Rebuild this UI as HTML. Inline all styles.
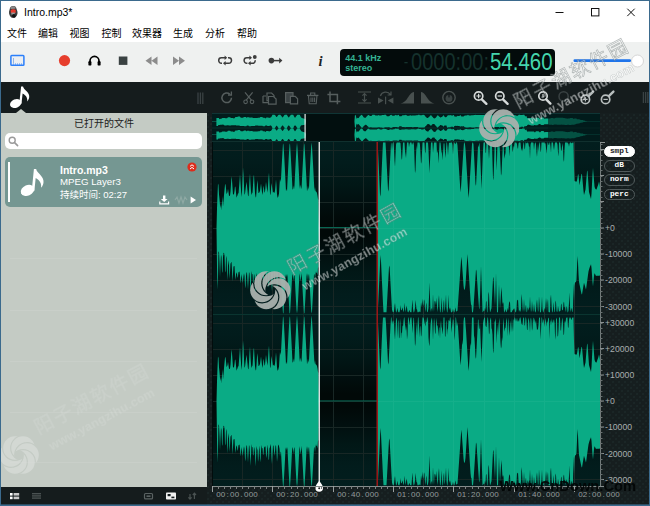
<!DOCTYPE html>
<html><head><meta charset="utf-8"><title>Intro.mp3*</title>
<style>
*{margin:0;padding:0;box-sizing:border-box}
html,body{width:650px;height:506px;overflow:hidden;background:#fff}
body{position:relative;font-family:"Liberation Sans","Noto Sans CJK SC",sans-serif;font-size:10px;color:#000}
.abs{position:absolute}
#win{position:absolute;left:0;top:0;width:650px;height:506px;overflow:hidden;background:#fff}
#bd{position:absolute;left:0;top:0;width:650px;height:506px;border:1px solid #3b6a8d;box-shadow:inset 0 -1px 0 rgba(59,106,141,0.6);pointer-events:none;z-index:50}
#title{left:24px;top:6px;font-size:10.5px;line-height:13px;color:#000;white-space:nowrap}
.menu{top:27px;font-size:10px;line-height:14px;white-space:nowrap;color:#000}
#tb{left:1px;top:42px;width:648px;height:40px;background:#eff1f0}
#dark{left:1px;top:82px;width:648px;height:423px;background-color:#161e1f;background-image:radial-gradient(circle,#202d2e 0.5px,transparent 0.9px),radial-gradient(circle,#202d2e 0.5px,transparent 0.9px);background-size:6px 6px;background-position:0 0,3px 3px}
#hdr{left:1px;top:82px;width:648px;height:31px;background-color:#151c1d}
#lp{left:1px;top:113px;width:206px;height:374px;background:#c4cbc4}
#lpb{left:1px;top:487px;width:206px;height:18px;background:#151c1d}
#heading{left:1px;top:117px;width:206px;text-align:center;font-size:10px;line-height:14px;color:#222}
#search{left:5px;top:133px;width:197px;height:16px;background:#fff;border-radius:5px}
#card{left:5px;top:157px;width:197px;height:50px;background:#759792;border-radius:5px}
#card .bar{left:3px;top:5px;width:1.5px;height:40px;background:#fff}
.ct{left:55px;color:#fff;white-space:nowrap;line-height:12px}
#lcd{left:340px;top:49px;width:215px;height:27px;background:#030b0b;border-radius:4px}
.lcds{left:6px;color:#3fc9a4;font-weight:bold;font-size:8px;line-height:9px;white-space:nowrap}
.sb{left:603.5px;width:31.5px;height:11.6px;border-radius:6px;border:1px solid #515a5b;color:#fff;font-family:"Liberation Mono",monospace;font-weight:bold;font-size:7.8px;line-height:9.6px;text-align:center}
.wm{position:absolute;white-space:nowrap;transform-origin:0 50%;pointer-events:none}
</style></head><body>
<div id="win">
<!-- title bar -->
<svg class="abs" style="left:8px;top:5px" width="10.5" height="13.6" viewBox="0 0 10 13"><path d="M2,2.5 C3,0.5 6.5,0.3 7.6,2.2 L8.6,5 C9.6,7 9.2,9.6 7.4,11.4 C6.2,12.6 3.8,12.6 2.6,11.4 C0.8,9.6 0.6,6.6 1.4,4.8Z" fill="#3a3a3a"/><path d="M2.6,5.2 C3.6,3.8 6.4,3.8 7.4,5.2 L7.2,7.6 L2.8,7.6Z" fill="#e8392c"/><path d="M2,2.6 C3,1 6.4,0.8 7.4,2.4 L7,3.6 L2.6,3.8Z" fill="#8a8a8a"/><rect x="3.2" y="7.2" width="3.2" height="2" fill="#9a9a9a"/><circle cx="5.6" cy="10.4" r="1.7" fill="#111"/></svg>
<div id="title" class="abs">Intro.mp3*</div>
<svg class="abs" style="left:540px;top:1px" width="109" height="24" viewBox="0 0 109 24" fill="none" stroke="#111" stroke-width="1"><line x1="15.5" y1="11.5" x2="23.5" y2="11.5"/><rect x="51.5" y="7.5" width="7.4" height="7.4"/><path d="M87.3,7.7 L94.7,15.1 M94.7,7.7 L87.3,15.1"/></svg>
<div class="abs menu" style="left:7px">文件</div><div class="abs menu" style="left:38px">编辑</div><div class="abs menu" style="left:69.5px">视图</div><div class="abs menu" style="left:101.5px">控制</div><div class="abs menu" style="left:132px">效果器</div><div class="abs menu" style="left:173px">生成</div><div class="abs menu" style="left:205px">分析</div><div class="abs menu" style="left:237px">帮助</div>
<!-- toolbar -->
<div id="tb" class="abs"></div>
<svg class="abs" style="left:0;top:42px" width="650" height="40" viewBox="0 42 650 40">
 <rect x="10.9" y="55.6" width="13" height="9.7" rx="0.8" fill="#eceff2" stroke="#2b7ffa" stroke-width="1.5"/>
 <line x1="13.5" y1="58" x2="13.5" y2="63" stroke="#7fa6e0" stroke-width="0.8"/><line x1="13" y1="64" x2="22.6" y2="64" stroke="#2b7ffa" stroke-width="0.8" stroke-dasharray="1 1"/>
 <circle cx="64.5" cy="60.6" r="5.6" fill="#e63e2d"/>
 <path d="M90,63 v-2 a4.5,4.6 0 0 1 9,0 v2" fill="none" stroke="#000" stroke-width="1.7"/><rect x="88.4" y="61" width="3" height="4.6" rx="1.2" fill="#000"/><rect x="97.6" y="61" width="3" height="4.6" rx="1.2" fill="#000"/>
 <rect x="118.8" y="56.5" width="8.6" height="8.4" fill="#3a4242"/>
 <path d="M151.5,56.6 v8.4 l-6,-4.2z M157.5,56.6 v8.4 l-6,-4.2z" fill="#8c8c8c"/>
 <path d="M173,56.6 v8.4 l6,-4.2z M179,56.6 v8.4 l6,-4.2z" fill="#8c8c8c"/>
 <g fill="none" stroke="#3c3c3c" stroke-width="1.5">
  <path d="M222,63.2 h-0.6 a2.7,2.7 0 0 1 0,-5.4 h4"/><path d="M228,57.8 h0.8 a2.7,2.7 0 0 1 0,5.4 h-4"/>
  <path d="M247.4,63.2 h-0.6 a2.7,2.7 0 0 1 0,-5.4 h3.4"/><path d="M255,60.2 a2.7,2.7 0 0 1 -1.2,3 h-4"/>
  <path d="M273.5,60.6 h7"/>
 </g>
 <g fill="#3c3c3c"><path d="M224.6,55.6 l2.6,2.2 l-2.6,2.2z"/><path d="M225.6,61 l-2.6,2.2 l2.6,2.2z"/>
  <path d="M249.4,55.6 l2.6,2.2 l-2.6,2.2z"/><path d="M250.6,61 l-2.6,2.2 l2.6,2.2z"/><circle cx="254.8" cy="57" r="1.9"/>
  <circle cx="271.4" cy="60.6" r="2.8"/><path d="M279.2,57.8 l3.2,2.8 l-3.2,2.8z"/></g>
 <text x="318.6" y="65.8" font-family="Liberation Serif,serif" font-style="italic" font-weight="bold" font-size="14.5" fill="#222">i</text>
 <rect x="573.5" y="59.3" width="57.5" height="2.6" rx="1.2" fill="#1f74ea"/>
 <circle cx="637.5" cy="61" r="6" fill="#fff" stroke="#d6d6d6" stroke-width="1"/>
</svg>
<div id="lcd" class="abs">
 <svg class="abs" style="left:0;top:0" width="215" height="27" viewBox="340 49 215 27"><g font-family="Liberation Sans,sans-serif" font-weight="bold" font-size="9" fill="#35b393"><text x="345.2" y="61.4">44.1 kHz</text><text x="345.2" y="70.6">stereo</text></g><rect x="404.4" y="62" width="3.2" height="1.3" fill="#15322d"/><text x="411" y="70.2" font-family="Liberation Sans,sans-serif" font-size="24.4" fill="#15322d" textLength="78" lengthAdjust="spacingAndGlyphs">0000:00:</text><text x="490" y="70.2" font-family="Liberation Sans,sans-serif" font-size="24.4" fill="#45d6ad" textLength="62.5" lengthAdjust="spacingAndGlyphs">54.460</text></svg>
</div>
<!-- dark body -->
<div id="dark" class="abs"></div>
<div id="hdr" class="abs"></div>
<div id="lp" class="abs"></div>
<div id="lpb" class="abs"></div>
<div class="abs" style="left:10px;top:258px;width:187px;height:1px;background:#c9cfc9"></div><div class="abs" style="left:10px;top:310px;width:187px;height:1px;background:#c9cfc9"></div><div class="abs" style="left:10px;top:361px;width:187px;height:1px;background:#c9cfc9"></div><div class="abs" style="left:10px;top:412px;width:187px;height:1px;background:#c9cfc9"></div><div class="abs" style="left:10px;top:462px;width:187px;height:1px;background:#c9cfc9"></div>
<svg class="abs" style="left:0;top:82px" width="40" height="31" viewBox="0 82 40 31"><g fill="#fff"><ellipse cx="15.7" cy="103.5" rx="5.9" ry="4.2" transform="rotate(-22 15.7 103.5)"/><path d="M19.3,103.4 L21.1,86.5 L23,86.5 C23.6,89.6 28.6,91.6 29.2,95.8 C29.5,98.2 28.5,100.2 27.1,101.4 C27.8,98.6 26.4,95.6 22.6,93.6 L21.5,103.8 Z"/></g></svg>
<svg class="abs" style="left:16px;top:109px" width="10" height="4" viewBox="0 0 10 4"><path d="M0,4 L5,0 L10,4Z" fill="#c4cbc4"/></svg>
<div id="heading" class="abs">已打开的文件</div>
<div id="search" class="abs"><svg class="abs" style="left:3px;top:3px" width="11" height="11" viewBox="0 0 11 11"><circle cx="4.2" cy="4.2" r="3" fill="none" stroke="#9a9a9a" stroke-width="1.4"/><line x1="6.6" y1="6.6" x2="9.6" y2="9.6" stroke="#9a9a9a" stroke-width="1.6" stroke-linecap="round"/></svg></div>
<div id="card" class="abs">
 <div class="abs bar"></div>
 <svg class="abs" style="left:0;top:0" width="60" height="50" viewBox="0 0 60 50"><g fill="#fff" transform="translate(4.04,-96.63) scale(1.179,1.256)"><ellipse cx="15.7" cy="103.5" rx="5.9" ry="4.2" transform="rotate(-22 15.7 103.5)"/><path d="M19.3,103.4 L21.1,86.5 L23,86.5 C23.6,89.6 28.6,91.6 29.2,95.8 C29.5,98.2 28.5,100.2 27.1,101.4 C27.8,98.6 26.4,95.6 22.6,93.6 L21.5,103.8 Z"/></g></svg>
 <div class="abs ct" style="top:7px;font-weight:bold;font-size:10.5px">Intro.mp3</div>
 <div class="abs ct" style="top:19px;font-size:9.7px">MPEG Layer3</div>
 <div class="abs ct" style="top:32px;font-size:9.5px">持续时间: 02:27</div>
 <svg class="abs" style="left:182px;top:5px" width="10" height="10" viewBox="0 0 10 10"><circle cx="5" cy="5" r="4.6" fill="#dd2c1c"/><path d="M3,4.4 L5,2.8 L7,4.4 M3,7 L5,5.4 L7,7" stroke="#fff" stroke-width="1" fill="none"/></svg>
 <svg class="abs" style="left:154px;top:37.5px" width="40" height="10" viewBox="0 0 40 10"><path d="M4,0.5 h2.4 v3.4 h2.2 l-3.4,3 l-3.4,-3 h2.2z" fill="#fff"/><path d="M0.8,6.4 v2.4 h8.8 v-2.4" fill="none" stroke="#fff" stroke-width="1.2"/><path d="M16,5 l2,-3 l2,6 l2,-6 l2,6 l2,-6 l2,3" fill="none" stroke="#8fa9a4" stroke-width="1.2"/><path d="M31.6,1.4 v7.2 l5.4,-3.6z" fill="#fff"/></svg>
</div>
<!-- left bottom bar icons -->
<svg class="abs" style="left:1px;top:487px" width="206" height="18" viewBox="1 487 206 18">
 <g fill="#fff"><rect x="10" y="493" width="2.6" height="2.6"/><rect x="10" y="496.6" width="2.6" height="2.6"/><rect x="13.6" y="493" width="5.6" height="2.6" fill="#c8c8c8"/><rect x="13.6" y="496.6" width="5.6" height="2.6" fill="#c8c8c8"/></g>
 <g fill="#4a5252"><rect x="32" y="493" width="9" height="1.4"/><rect x="32" y="495.2" width="9" height="1.4"/><rect x="32" y="497.4" width="9" height="1.4"/></g>
 <rect x="144.5" y="493.5" width="8" height="5.4" rx="1" fill="none" stroke="#5a6262" stroke-width="1.2"/><rect x="146.5" y="495.4" width="4" height="1.6" fill="#5a6262"/>
 <rect x="166" y="492.6" width="10" height="7" rx="0.8" fill="#f2f2f2"/><rect x="167.6" y="494" width="3" height="2.2" fill="#151d1f"/><rect x="171.4" y="496.6" width="3" height="1.6" fill="#151d1f"/>
 <path d="M190,499 v-5 M188.4,497.4 l1.6,1.8 l1.6,-1.8 M194.4,493.4 v5.6 M192.8,495 l1.6,-1.8 l1.6,1.8" fill="none" stroke="#4a5252" stroke-width="1.2"/>
</svg>
<!-- header toolbar icons -->
<svg class="abs" style="left:0;top:82px" width="650" height="31" viewBox="0 82 650 31">
 <g stroke="#3a4244" stroke-width="1.3"><line x1="198" y1="92.5" x2="198" y2="104"/><line x1="200.4" y1="92.5" x2="200.4" y2="104"/><line x1="202.8" y1="92.5" x2="202.8" y2="104"/>
  <line x1="643.4" y1="92" x2="643.4" y2="103"/><line x1="645.6" y1="92" x2="645.6" y2="103"/><line x1="647.8" y1="92" x2="647.8" y2="103"/></g>
 <g fill="none" stroke="#565e5e" stroke-width="1.5">
  <path d="M231.5,97.8 a4.8,4.8 0 1 1 -1.6,-3.6"/><path d="M231.4,91.6 v3.4 h-3.4" stroke-width="1.3"/>
  <path d="M245,92.4 l6.6,8 M252.6,92.4 l-6.6,8" stroke-width="1.2"/><circle cx="245.6" cy="101.8" r="1.8" stroke-width="1.1"/><circle cx="252" cy="101.8" r="1.8" stroke-width="1.1"/>
  <path d="M267,93 h4.6 l2.4,2.4 v5.2 h-7z M263,96 h3 M263,96 v6.6 h6" stroke-width="1.2"/>
  <path d="M268.5,96.5 h5 l2.6,2.6 v5 h-7.6z" fill="#141c1e" stroke-width="1.2"/>
  <rect x="285.6" y="92.6" width="7.4" height="10" stroke-width="1.2" fill="#3a4244"/><path d="M290.4,96.4 h4.8 l2.4,2.4 v5 h-7.2z" fill="#141c1e" stroke-width="1.2"/>
  <path d="M308.4,95.6 h8.6 l-0.8,8.2 h-7z M307,95.4 h11.4 M310.6,95 v-2 h4.2 v2 M311,97.6 v4.4 M312.8,97.6 v4.4 M314.6,97.6 v4.4" stroke-width="1.1"/>
  <path d="M330,91.4 v10 h10.4 M327.4,94.4 h10 v9.8" stroke-width="1.5"/>
 </g>
 <g fill="none" stroke="#48504f" stroke-width="1.2">
  <path d="M358,92 h13 M358,103 h13 M364.5,93.6 v8 M362.4,95.6 l2.1,-2 l2.1,2 M362.4,99.4 l2.1,2 l2.1,-2"/>
  <path d="M380.4,96 a5.6,5.6 0 0 1 10,-1.4 M391,91.4 v3.6 h-3.4"/>
 </g>
 <g fill="#48504f"><path d="M378,97.4 v6.4 l5.6,-3.2z M393.4,97.4 v6.4 l-5.6,-3.2z"/><rect x="385" y="96.6" width="1.2" height="7.6"/>
  <path d="M400.4,103.4 h13.6 v-11.4 c-3,0 -5,4 -7,7 c-2,2.6 -4,4 -6.6,4.4z"/>
  <path d="M421,103.4 h13.6 c-2.6,-0.4 -4.6,-1.8 -6.6,-4.4 c-2,-3 -4,-7 -7,-7z"/>
 </g>
 <circle cx="449" cy="97.6" r="6.2" fill="none" stroke="#48504f" stroke-width="1.4"/><circle cx="449" cy="98.4" r="3.4" fill="#3a4242"/><rect x="448.3" y="93" width="1.4" height="4.4" fill="#141c1e"/>
 <!-- zoom icons -->
 <g fill="none" stroke="#d6dada" stroke-width="1.7">
  <circle cx="478.6" cy="96" r="4.2"/><path d="M481.8,99.4 l4.6,4.4" stroke-width="2.4" stroke-linecap="round"/><path d="M476.4,96 h4.4 M478.6,93.8 v4.4" stroke-width="1.2"/>
  <circle cx="499.8" cy="96" r="4.2"/><path d="M503,99.4 l4.6,4.4" stroke-width="2.4" stroke-linecap="round"/><path d="M497.6,96 h4.4" stroke-width="1.2"/>
  <circle cx="543" cy="96" r="4.2"/><path d="M546.2,99.4 l4.2,4.2" stroke-width="2.4" stroke-linecap="round"/><path d="M543,94 v3.6" stroke-width="1.2"/>
  <circle cx="585.4" cy="99.4" r="4.2" stroke="#b8bebe"/><path d="M588.6,96.2 l4.6,-4.6" stroke-width="2.4" stroke-linecap="round" stroke="#b8bebe"/><path d="M583.2,99.4 h4.4 M585.4,97.2 v4.4" stroke-width="1.2" stroke="#b8bebe"/>
  <circle cx="605.6" cy="99.4" r="4.2" stroke="#b8bebe"/><path d="M608.8,96.2 l4.6,-4.6" stroke-width="2.4" stroke-linecap="round" stroke="#b8bebe"/><path d="M603.4,99.4 h4.4" stroke-width="1.2" stroke="#b8bebe"/>
 </g>
 <g fill="none" stroke="#394142" stroke-width="1.5"><circle cx="521" cy="96.4" r="4.6"/><path d="M524.4,100 l3.6,3.6" stroke-width="2"/><circle cx="563.6" cy="96.4" r="4.6"/><path d="M567,100 l3.6,3.6" stroke-width="2"/></g>
</svg>

<svg class="abs" style="left:0;top:0" width="650" height="506" viewBox="0 0 650 506">
<defs>
<linearGradient id="gch" x1="0" y1="0" x2="0" y2="1">
 <stop offset="0" stop-color="#021e1e"/><stop offset="0.12" stop-color="#021c1c"/><stop offset="0.25" stop-color="#011716"/><stop offset="0.36" stop-color="#010f0f"/><stop offset="0.46" stop-color="#010908"/><stop offset="0.54" stop-color="#010908"/><stop offset="0.64" stop-color="#010f0f"/><stop offset="0.75" stop-color="#011716"/><stop offset="0.88" stop-color="#021c1c"/><stop offset="1" stop-color="#021e1e"/>
</linearGradient>
</defs>
<!-- overview -->
<rect x="212" y="113" width="388" height="29" fill="#021c1c"/>
<rect x="212" y="113" width="388" height="1" fill="#0f3535"/>
<line x1="212" y1="121.5" x2="600" y2="121.5" stroke="#0a5044"/>
<line x1="212" y1="128" x2="600" y2="128" stroke="#0a2e2c"/>
<line x1="212" y1="134.5" x2="600" y2="134.5" stroke="#0a5044"/>
<rect x="305" y="114" width="50" height="27" fill="#020f0f"/>
<path d="M216.4,117.9L216.9,117.9L217.4,117.9L217.9,117.9L218.4,117.9L218.9,118L219.4,119.1L219.9,119.3L220.4,118.8L220.9,118.8L221.4,118.7L221.9,118.3L222.4,118L222.9,117.9L223.4,117.9L223.9,117.9L224.4,117.9L224.9,117.9L225.4,118.2L225.9,118.3L226.4,118.3L226.9,118.3L227.4,117.9L227.9,117.3L228.4,117.3L228.9,117.3L229.4,117.3L229.9,117.3L230.4,117.6L230.9,118.1L231.4,118.1L231.9,118.1L232.4,118.1L232.9,118.1L233.4,118.2L233.9,118.5L234.4,118.2L234.9,117.7L235.4,117.1L235.9,117.1L236.4,117.1L236.9,117.1L237.4,117.1L237.9,116.6L238.4,116.6L238.9,116.6L239.4,116.6L239.9,116.6L240.4,117.2L240.9,117.7L241.4,117.7L241.9,117.7L242.4,117.7L242.9,117.7L243.4,117.6L243.9,117.1L244.4,117.1L244.9,117.1L245.4,117.1L245.9,117.1L246.4,117.9L246.9,117.3L247.4,117.2L247.9,117.2L248.4,117.2L248.9,117.2L249.4,117.2L249.9,117.9L250.4,117.6L250.9,117.6L251.4,117.6L251.9,117.6L252.4,117.6L252.9,118.1L253.4,117.9L253.9,117.9L254.4,117.9L254.9,117.9L255.4,117.9L255.9,118L256.4,118L256.9,118L257.4,118L257.9,117.7L258.4,117.7L258.9,117.7L259.4,117.7L259.9,117.4L260.4,117L260.9,117L261.4,117L261.9,117L262.4,117L262.9,117.8L263.4,117.8L263.9,117.8L264.4,117.8L264.9,118.1L265.4,118.4L265.9,118L266.4,117.5L266.9,117.5L267.4,117.5L267.9,117.5L268.4,117.5L268.9,118L269.4,118L269.9,117.5L270.4,117.5L270.9,117.5L271.4,116.8L271.9,116L272.4,114.8L272.9,114.8L273.4,114.8L273.9,114.8L274.4,114.8L274.9,114.9L275.4,115.5L275.9,116.2L276.4,116.9L276.9,116.9L277.4,116.2L277.9,115.5L278.4,114.9L278.9,114.8L279.4,114.8L279.9,114.8L280.4,114.8L280.9,115.4L281.4,116L281.9,116.8L282.4,117.5L282.9,117.2L283.4,116.5L283.9,115.8L284.4,115.1L284.9,114.7L285.4,114.7L285.9,114.7L286.4,114.7L286.9,114.7L287.4,115.8L287.9,116.5L288.4,117.2L288.9,117.5L289.4,116.8L289.9,116L290.4,115.4L290.9,114.8L291.4,114.8L291.9,114.8L292.4,114.8L292.9,114.8L293.4,114.9L293.9,116.2L294.4,116.9L294.9,117.7L295.4,117.4L295.9,116.6L296.4,115.9L296.9,115.2L297.4,114.7L297.9,114.7L298.4,114.7L298.9,114.7L299.4,114.7L299.9,115L300.4,116.3L300.9,117.1L301.4,117.8L301.9,118.1L302.4,118.1L302.9,118.4L303.4,118.5L303.9,118.6L304.4,118.8L304.9,119.1L305.4,119.1L305.9,121.3L306.4,121.3L306.9,121.3L307.4,121.3L307.9,121.3L308.4,121.3L308.9,121.3L309.4,121.3L309.9,121.3L310.4,121.3L310.9,121.3L311.4,121.3L311.9,121.3L312.4,121.3L312.9,121.3L313.4,121.3L313.9,121.3L314.4,121.3L314.9,121.3L315.4,121.3L315.9,121.3L316.4,121.3L316.9,121.3L317.4,121.3L317.9,121.3L318.4,121.3L318.9,121.3L319.4,121.3L319.9,121.3L320.4,121.3L320.9,121.3L321.4,121.3L321.9,121.3L322.4,121.3L322.9,121.3L323.4,121.3L323.9,121.3L324.4,121.3L324.9,121.3L325.4,121.3L325.9,121.3L326.4,121.3L326.9,121.3L327.4,121.3L327.9,121.3L328.4,121.3L328.9,121.3L329.4,121.3L329.9,121.3L330.4,121.3L330.9,121.3L331.4,121.3L331.9,121.3L332.4,121.3L332.9,121.3L333.4,121.3L333.9,121.3L334.4,121.3L334.9,121.3L335.4,121.3L335.9,121.3L336.4,121.3L336.9,121.3L337.4,121.3L337.9,121.3L338.4,121.3L338.9,121.3L339.4,121.3L339.9,121.3L340.4,121.3L340.9,121.3L341.4,121.3L341.9,121.3L342.4,121.3L342.9,121.3L343.4,121.3L343.9,121.3L344.4,121.3L344.9,121.3L345.4,121.3L345.9,121.3L346.4,121.3L346.9,121.3L347.4,121.3L347.9,121.3L348.4,121.3L348.9,121.3L349.4,121.3L349.9,121.3L350.4,121.3L350.9,121.3L351.4,121.3L351.9,121.3L352.4,121.3L352.9,121.3L353.4,121.3L353.9,121.3L354.4,121.3L354.9,115.2L355.4,115.2L355.9,115.2L356.4,119.2L356.9,117.6L357.4,117.9L357.9,118.2L358.4,118L358.9,117.7L359.4,116.8L359.9,116.3L360.4,115.7L360.9,115.2L361.4,114.7L361.9,115.1L362.4,115.6L362.9,116.1L363.4,117.1L363.9,117.4L364.4,117.6L364.9,117.9L365.4,117.7L365.9,117.4L366.4,116.7L366.9,116.2L367.4,115.7L367.9,115.2L368.4,115.1L368.9,115.1L369.4,115.6L369.9,115.9L370.4,115.9L370.9,115.9L371.4,115.9L371.9,115.4L372.4,114.8L372.9,114.7L373.4,114.7L373.9,114.7L374.4,114.7L374.9,115.1L375.4,115.5L375.9,115.6L376.4,115.6L376.9,115.6L377.4,115.6L377.9,115.6L378.4,115.1L378.9,115.3L379.4,115.5L379.9,115.5L380.4,115.5L380.9,115.5L381.4,115.5L381.9,114.9L382.4,114.9L382.9,114.9L383.4,114.9L383.9,114.9L384.4,114.8L384.9,114.8L385.4,114.8L385.9,114.8L386.4,115.5L386.9,116.2L387.4,116.2L387.9,116.2L388.4,116.3L388.9,116.3L389.4,116.1L389.9,115.4L390.4,115.1L390.9,115.1L391.4,114.8L391.9,115.3L392.4,115.8L392.9,115.8L393.4,115.8L393.9,115.8L394.4,115.8L394.9,115.2L395.4,114.7L395.9,115.3L396.4,115.3L396.9,115.3L397.4,115.3L397.9,115.3L398.4,114.7L398.9,115.1L399.4,116.2L399.9,116.2L400.4,116.2L400.9,116.2L401.4,116.2L401.9,115.7L402.4,115.2L402.9,115.2L403.4,115.2L403.9,115.2L404.4,115.2L404.9,115L405.4,114.7L405.9,115.3L406.4,115.3L406.9,115.3L407.4,115.8L407.9,116L408.4,115.8L408.9,115.8L409.4,115.8L409.9,115.3L410.4,115.3L410.9,115.6L411.4,115.7L411.9,115.6L412.4,115.6L412.9,115.6L413.4,115.5L413.9,115.5L414.4,115.5L414.9,115.5L415.4,115.5L415.9,115.3L416.4,115.3L416.9,115.3L417.4,115.3L417.9,114.9L418.4,114.7L418.9,114.7L419.4,114.8L419.9,115.3L420.4,115.3L420.9,115.3L421.4,115.3L421.9,115.3L422.4,114.9L422.9,114.8L423.4,114.8L423.9,114.9L424.4,115.2L424.9,115.6L425.4,116.4L425.9,116.9L426.4,117.5L426.9,117.7L427.4,118.1L427.9,118L428.4,117.6L428.9,117.1L429.4,116.6L429.9,116.2L430.4,115.4L430.9,115L431.4,115.4L431.9,116.3L432.4,116.7L432.9,117.2L433.4,117.9L433.9,118.3L434.4,118.5L434.9,118.2L435.4,118L435.9,117.5L436.4,116.9L436.9,116L437.4,115.6L437.9,115.2L438.4,115.8L438.9,116.3L439.4,116.8L439.9,116.9L440.4,117.5L440.9,117.5L441.4,117L441.9,117L442.4,116.4L442.9,115.9L443.4,115.1L443.9,115.7L444.4,116.4L444.9,117L445.4,117.2L445.9,117.2L446.4,117L446.9,116.4L447.4,115.7L447.9,115.2L448.4,115.2L448.9,115.2L449.4,115.2L449.9,115.2L450.4,115.2L450.9,115.1L451.4,115.5L451.9,115.5L452.4,115.5L452.9,115.5L453.4,115.1L453.9,114.9L454.4,116.5L454.9,116.6L455.4,116.6L455.9,116.7L456.4,116.6L456.9,116.6L457.4,115.8L457.9,116.1L458.4,116.1L458.9,116.1L459.4,116.1L459.9,115.6L460.4,115L460.9,115.8L461.4,116.4L461.9,116.4L462.4,116.4L462.9,116.6L463.4,116.4L463.9,116.3L464.4,115.7L464.9,115.5L465.4,115.5L465.9,115.5L466.4,115.5L466.9,115.3L467.4,115.2L467.9,114.8L468.4,115L468.9,115.4L469.4,115.4L469.9,115.4L470.4,115.4L470.9,115.4L471.4,115.2L471.9,115.2L472.4,115.2L472.9,115.2L473.4,115.2L473.9,115.1L474.4,115L474.9,115L475.4,114.8L475.9,115L476.4,115L476.9,115L477.4,115L477.9,115L478.4,115L478.9,115L479.4,115.1L479.9,115.1L480.4,115.1L480.9,115.1L481.4,115.1L481.9,115.1L482.4,115.1L482.9,115.1L483.4,115.1L483.9,115.1L484.4,115L484.9,114.8L485.4,114.8L485.9,114.9L486.4,114.9L486.9,115.5L487.4,115.5L487.9,115.5L488.4,115.5L488.9,114.8L489.4,114.7L489.9,114.7L490.4,115.1L490.9,115.1L491.4,115.1L491.9,115.1L492.4,115.2L492.9,115.4L493.4,115.4L493.9,115.5L494.4,115.5L494.9,115.4L495.4,115.2L495.9,115.2L496.4,115.2L496.9,115.2L497.4,115.2L497.9,115.2L498.4,115.1L498.9,114.7L499.4,114.7L499.9,114.8L500.4,115L500.9,115.3L501.4,115.3L501.9,115.3L502.4,115.3L502.9,115.3L503.4,115L503.9,114.8L504.4,114.9L504.9,115.2L505.4,115.2L505.9,115.2L506.4,115.2L506.9,115.2L507.4,115.1L507.9,115.1L508.4,115.1L508.9,115.1L509.4,115.1L509.9,114.9L510.4,114.8L510.9,115.2L511.4,115.4L511.9,115.4L512.4,115.4L512.9,115.4L513.4,115.4L513.9,115.1L514.4,115.1L514.9,115.2L515.4,115.2L515.9,115.6L516.4,115.7L516.9,115.7L517.4,115.7L517.9,115.7L518.4,115.1L518.9,114.7L519.4,114.7L519.9,114.8L520.4,114.9L520.9,114.9L521.4,114.9L521.9,114.9L522.4,114.9L522.9,114.8L523.4,114.7L523.9,114.7L524.4,114.7L524.9,116L525.4,116.6L525.9,115.9L526.4,115.9L526.9,117.5L527.4,118.3L527.9,118.1L528.4,117.9L528.9,117.9L529.4,117.9L529.9,117.9L530.4,117.9L530.9,117.9L531.4,117.9L531.9,117.9L532.4,117.9L532.9,117.9L533.4,117.9L533.9,117.9L534.4,118.6L534.9,118.9L535.4,118.5L535.9,117.7L536.4,117.7L536.9,117.7L537.4,117.7L537.9,117.7L538.4,117.7L538.9,118.1L539.4,118.6L539.9,119L540.4,118.5L540.9,117.9L541.4,117.5L541.9,117.5L542.4,117.5L542.9,117.5L543.4,117.5L543.9,117.9L544.4,118.7L544.9,118.8L545.4,118.6L545.9,118.5L546.4,118.4L546.9,118.4L547.4,118.4L547.9,118.4L548.4,118.4L548.9,118.4L549.4,118.4L549.9,118.4L550.4,118.4L550.9,118L551.4,118L551.9,118L552.4,118L552.9,118L553.4,118.2L553.9,118.4L554.4,118.5L554.9,118.1L555.4,117.9L555.9,117.8L556.4,117.8L556.9,117.8L557.4,117.8L557.9,117.8L558.4,117.8L558.9,117.8L559.4,117.8L559.9,117.8L560.4,117.8L560.9,117.8L561.4,117.8L561.9,117.8L562.4,117.8L562.9,117.8L563.4,118L563.9,118L564.4,118L564.9,118.3L565.4,118.3L565.9,118.5L566.4,118.5L566.9,118.5L567.4,118.7L567.9,118.6L568.4,118.6L568.9,118.6L569.4,118.6L569.9,118.3L570.4,117.9L570.9,117.9L571.4,117.9L571.9,117.9L572.4,117.9L572.9,118.3L573.4,118.7L573.9,118.9L574.4,118.5L574.9,118.5L575.4,118.5L575.9,118.5L576.4,118.5L576.9,119.2L577.4,119.2L577.9,119.2L578.4,119.2L578.9,119.2L579.4,119.2L579.9,119.7L580.4,119.7L580.9,120L581.4,120.1L581.9,120.1L582.4,120.1L582.9,120.1L583.4,120.4L583.9,120.4L584.4,120.5L584.9,120.7L585.4,120.9L585.9,120.9L586.4,121.1L586.9,121.2L587.4,121.3L587.9,121.3L588.4,121.3L588.9,121.3L589.4,121.3L589.9,121.3L590.4,121.3L590.9,121.3L591.4,121.3L591.9,121.3L592.4,121.3L592.9,121.3L593.4,121.3L593.9,121.3L594.4,121.3L594.9,121.3L595.4,121.3L595.9,121.3L596.4,121.3L596.9,121.3L597.4,121.3L597.9,121.3L598.4,121.3L598.9,121.3L598.9,121.3L598.4,121.3L597.9,121.3L597.4,121.3L596.9,121.3L596.4,121.3L595.9,121.3L595.4,121.3L594.9,121.3L594.4,121.3L593.9,121.3L593.4,121.3L592.9,121.3L592.4,121.3L591.9,121.3L591.4,121.3L590.9,121.3L590.4,121.3L589.9,121.3L589.4,121.3L588.9,121.3L588.4,121.3L587.9,121.3L587.4,121.3L586.9,121.4L586.4,121.4L585.9,121.6L585.4,121.7L584.9,121.9L584.4,121.9L583.9,121.9L583.4,122.1L582.9,122.4L582.4,122.4L581.9,122.5L581.4,122.7L580.9,122.7L580.4,122.7L579.9,123.2L579.4,123.2L578.9,123.4L578.4,123.4L577.9,123.4L577.4,123.7L576.9,123.7L576.4,123.7L575.9,124.2L575.4,124.2L574.9,124.2L574.4,124.7L573.9,124.7L573.4,124.7L572.9,124.7L572.4,124.7L571.9,124.6L571.4,125L570.9,125L570.4,125L569.9,125L569.4,125L568.9,124.8L568.4,124.7L567.9,124.7L567.4,124.7L566.9,124.9L566.4,124.9L565.9,124.9L565.4,124.9L564.9,124.9L564.4,124.7L563.9,124.7L563.4,124.7L562.9,124.7L562.4,124.7L561.9,124.7L561.4,124.6L560.9,124.7L560.4,124.7L559.9,124.7L559.4,124.7L558.9,124.8L558.4,124.8L557.9,124.8L557.4,124.8L556.9,124.8L556.4,124.5L555.9,124.5L555.4,124.5L554.9,124.4L554.4,124.4L553.9,124.4L553.4,124.9L552.9,124.9L552.4,124.9L551.9,124.9L551.4,124.6L550.9,124.7L550.4,124.7L549.9,124.7L549.4,124.7L548.9,124.7L548.4,124.3L547.9,124.3L547.4,124.3L546.9,124.3L546.4,124.3L545.9,124.3L545.4,124.3L544.9,124.3L544.4,124.3L543.9,124.7L543.4,125L542.9,125L542.4,125L541.9,125L541.4,125L540.9,124.7L540.4,124.3L539.9,123.9L539.4,124.1L538.9,124.3L538.4,124.5L537.9,124.7L537.4,125.2L536.9,125.2L536.4,125.2L535.9,125.2L535.4,125.2L534.9,125.1L534.4,125.1L533.9,125.5L533.4,125.5L532.9,125.5L532.4,125.5L531.9,125.5L531.4,125.5L530.9,125.3L530.4,125.2L529.9,125L529.4,124.9L528.9,124.6L528.4,124.7L527.9,124.7L527.4,125L526.9,125.9L526.4,125.9L525.9,126.3L525.4,126.3L524.9,126.3L524.4,126.3L523.9,127.6L523.4,127.5L522.9,126.8L522.4,126.8L521.9,126.8L521.4,126.8L520.9,126.8L520.4,127.3L519.9,127.5L519.4,127.5L518.9,127.5L518.4,127.5L517.9,127.3L517.4,127.2L516.9,127.2L516.4,127.2L515.9,127.3L515.4,127.3L514.9,127.3L514.4,127.3L513.9,127.4L513.4,127.4L512.9,127.5L512.4,127.5L511.9,127.5L511.4,127.3L510.9,127.2L510.4,127.2L509.9,127.2L509.4,127.2L508.9,127.2L508.4,127.3L507.9,127.3L507.4,127.3L506.9,126.9L506.4,126.9L505.9,126.9L505.4,126.9L504.9,126.9L504.4,127.1L503.9,127.1L503.4,127.1L502.9,127.1L502.4,127.1L501.9,127.1L501.4,127.1L500.9,127L500.4,127.1L499.9,127.5L499.4,127.6L498.9,127L498.4,127L497.9,127L497.4,127L496.9,127L496.4,127L495.9,127L495.4,127L494.9,127L494.4,127L493.9,127.1L493.4,127.1L492.9,127.1L492.4,127.4L491.9,127.4L491.4,127.4L490.9,127.4L490.4,127.2L489.9,127.2L489.4,127.2L488.9,127.2L488.4,127L487.9,127L487.4,127L486.9,127L486.4,127.5L485.9,127.5L485.4,127.4L484.9,127.4L484.4,127.4L483.9,127.4L483.4,127.1L482.9,127.1L482.4,127.1L481.9,127.1L481.4,126.9L480.9,126.9L480.4,126.9L479.9,126.9L479.4,126.9L478.9,127.6L478.4,127.2L477.9,127.2L477.4,127.2L476.9,127.1L476.4,127.2L475.9,127.2L475.4,127.2L474.9,127.6L474.4,127.6L473.9,127.6L473.4,127.5L472.9,127.6L472.4,127.6L471.9,127.7L471.4,127.3L470.9,127.2L470.4,127.2L469.9,127.2L469.4,127.2L468.9,127.2L468.4,127.4L467.9,127.6L467.4,127.6L466.9,127.6L466.4,127.6L465.9,127.4L465.4,127.3L464.9,127.3L464.4,127L463.9,126.3L463.4,126.3L462.9,126.3L462.4,126.5L461.9,126.3L461.4,126.3L460.9,126.4L460.4,126.4L459.9,126.4L459.4,125.9L458.9,125.9L458.4,125.9L457.9,125.9L457.4,125.7L456.9,125.9L456.4,125.9L455.9,125.6L455.4,125.9L454.9,126L454.4,126.1L453.9,127.1L453.4,127.5L452.9,126.8L452.4,126.8L451.9,126.8L451.4,126.8L450.9,126.8L450.4,127.2L449.9,127.2L449.4,127.2L448.9,127.2L448.4,127.2L447.9,127.6L447.4,127.7L446.9,127L446.4,125.5L445.9,125.5L445.4,125.5L444.9,125.4L444.4,125.4L443.9,126.2L443.4,126.8L442.9,126L442.4,125.6L441.9,125.4L441.4,125.2L440.9,124.9L440.4,125.1L439.9,125.5L439.4,126L438.9,126.4L438.4,126.8L437.9,127.4L437.4,127.4L436.9,127.2L436.4,126.4L435.9,125.8L435.4,125.4L434.9,124.9L434.4,124.1L433.9,123.9L433.4,123.9L432.9,124.1L432.4,124.2L431.9,124.7L431.4,125.4L430.9,125.8L430.4,125.5L429.9,124.8L429.4,124.4L428.9,124.3L428.4,124.1L427.9,124L427.4,124.2L426.9,124.8L426.4,125.4L425.9,125.9L425.4,126.3L424.9,127L424.4,127.4L423.9,127.5L423.4,127.5L422.9,127.5L422.4,127.5L421.9,127.5L421.4,127.6L420.9,127.6L420.4,127.6L419.9,127.6L419.4,127.6L418.9,127.6L418.4,127.5L417.9,126.9L417.4,126.9L416.9,126.9L416.4,126.9L415.9,126.9L415.4,126.9L414.9,126.9L414.4,126.9L413.9,126.9L413.4,127.2L412.9,127.2L412.4,127.2L411.9,127.1L411.4,127.1L410.9,127.1L410.4,127.1L409.9,126.9L409.4,126.9L408.9,126.9L408.4,126.9L407.9,126.9L407.4,127.1L406.9,127.1L406.4,127.1L405.9,126.9L405.4,127.2L404.9,127.2L404.4,126.9L403.9,126.9L403.4,126.9L402.9,126.9L402.4,126.9L401.9,127.1L401.4,126.3L400.9,126.3L400.4,126.3L399.9,126.3L399.4,126.3L398.9,127.3L398.4,127.3L397.9,127.3L397.4,127.2L396.9,127.1L396.4,127.1L395.9,127.1L395.4,127L394.9,127L394.4,127L393.9,127.1L393.4,127.1L392.9,127.3L392.4,127.3L391.9,127.8L391.4,127.8L390.9,127.7L390.4,127.7L389.9,127.4L389.4,127.2L388.9,127.1L388.4,127.2L387.9,127.2L387.4,127.2L386.9,127.2L386.4,127.2L385.9,127.2L385.4,127.2L384.9,127.2L384.4,127.4L383.9,127.7L383.4,127.7L382.9,127.7L382.4,127.7L381.9,127.6L381.4,127.5L380.9,127.5L380.4,127.5L379.9,127.3L379.4,127.3L378.9,127.3L378.4,127.3L377.9,127.3L377.4,127.6L376.9,127.6L376.4,127.4L375.9,127.4L375.4,127.4L374.9,127.4L374.4,127.4L373.9,127.6L373.4,127.6L372.9,127.6L372.4,127.6L371.9,127.6L371.4,127.3L370.9,127.3L370.4,127.3L369.9,127.3L369.4,127.5L368.9,127.7L368.4,126.8L367.9,126.4L367.4,125.9L366.9,125.4L366.4,124.9L365.9,124.7L365.4,124.7L364.9,125.2L364.4,125.5L363.9,126L363.4,126.4L362.9,127.3L362.4,127.8L361.9,127.8L361.4,127.4L360.9,126.8L360.4,126.3L359.9,125.8L359.4,125L358.9,124.4L358.4,124.1L357.9,124.2L357.4,124.5L356.9,124.8L356.4,123.5L355.9,127.5L355.4,127.5L354.9,127.5L354.4,121.3L353.9,121.3L353.4,121.3L352.9,121.3L352.4,121.3L351.9,121.3L351.4,121.3L350.9,121.3L350.4,121.3L349.9,121.3L349.4,121.3L348.9,121.3L348.4,121.3L347.9,121.3L347.4,121.3L346.9,121.3L346.4,121.3L345.9,121.3L345.4,121.3L344.9,121.3L344.4,121.3L343.9,121.3L343.4,121.3L342.9,121.3L342.4,121.3L341.9,121.3L341.4,121.3L340.9,121.3L340.4,121.3L339.9,121.3L339.4,121.3L338.9,121.3L338.4,121.3L337.9,121.3L337.4,121.3L336.9,121.3L336.4,121.3L335.9,121.3L335.4,121.3L334.9,121.3L334.4,121.3L333.9,121.3L333.4,121.3L332.9,121.3L332.4,121.3L331.9,121.3L331.4,121.3L330.9,121.3L330.4,121.3L329.9,121.3L329.4,121.3L328.9,121.3L328.4,121.3L327.9,121.3L327.4,121.3L326.9,121.3L326.4,121.3L325.9,121.3L325.4,121.3L324.9,121.3L324.4,121.3L323.9,121.3L323.4,121.3L322.9,121.3L322.4,121.3L321.9,121.3L321.4,121.3L320.9,121.3L320.4,121.3L319.9,121.3L319.4,121.3L318.9,121.3L318.4,121.3L317.9,121.3L317.4,121.3L316.9,121.3L316.4,121.3L315.9,121.3L315.4,121.3L314.9,121.3L314.4,121.3L313.9,121.3L313.4,121.3L312.9,121.3L312.4,121.3L311.9,121.3L311.4,121.3L310.9,121.3L310.4,121.3L309.9,121.3L309.4,121.3L308.9,121.3L308.4,121.3L307.9,121.3L307.4,121.3L306.9,121.3L306.4,121.3L305.9,121.3L305.4,124.4L304.9,124.4L304.4,125L303.9,125L303.4,125L302.9,125L302.4,125.3L301.9,125.3L301.4,125.3L300.9,125.7L300.4,126.4L299.9,127.7L299.4,127.9L298.9,127.9L298.4,127.9L297.9,127.9L297.4,127.9L296.9,127.5L296.4,126.8L295.9,126.1L295.4,125.4L294.9,125.4L294.4,125.8L293.9,126.5L293.4,127.9L292.9,127.9L292.4,127.9L291.9,127.9L291.4,127.9L290.9,127.9L290.4,127.4L289.9,126.7L289.4,126L288.9,125.4L288.4,125.5L287.9,126.3L287.4,127L286.9,127.9L286.4,127.9L285.9,127.9L285.4,127.9L284.9,127.9L284.4,127.6L283.9,127L283.4,126.3L282.9,125.5L282.4,125.4L281.9,126L281.4,126.7L280.9,127.4L280.4,127.9L279.9,127.9L279.4,127.9L278.9,127.9L278.4,127.9L277.9,127.2L277.4,126.5L276.9,125.8L276.4,125.8L275.9,126.5L275.4,127.2L274.9,127.9L274.4,127.9L273.9,127.9L273.4,127.9L272.9,127.9L272.4,127.9L271.9,126.7L271.4,126L270.9,125.6L270.4,125.6L269.9,125.6L269.4,126L268.9,126L268.4,126L267.9,126L267.4,126L266.9,125.5L266.4,125.5L265.9,125.5L265.4,125.5L264.9,126.2L264.4,126.2L263.9,126.2L263.4,126.2L262.9,126.2L262.4,125.8L261.9,125.8L261.4,125.8L260.9,125.8L260.4,125.8L259.9,125.8L259.4,125.7L258.9,125.7L258.4,125.7L257.9,125.5L257.4,125.5L256.9,125.5L256.4,125.5L255.9,125.5L255.4,125.5L254.9,126L254.4,126L253.9,126L253.4,126L252.9,126L252.4,126L251.9,126L251.4,126L250.9,126.3L250.4,126.3L249.9,126.3L249.4,126.3L248.9,126.3L248.4,125.5L247.9,125.5L247.4,125.5L246.9,125.6L246.4,126.3L245.9,126.3L245.4,126.3L244.9,126.3L244.4,126.3L243.9,126L243.4,126L242.9,126L242.4,126L241.9,126L241.4,126L240.9,126L240.4,126L239.9,126L239.4,125.5L238.9,125.5L238.4,125.5L237.9,125.6L237.4,125.6L236.9,125.6L236.4,125.6L235.9,125.6L235.4,125L234.9,125.2L234.4,125.2L233.9,125.2L233.4,125.3L232.9,125.3L232.4,125.3L231.9,125.3L231.4,125.3L230.9,125.4L230.4,125.4L229.9,125.4L229.4,125.4L228.9,125.4L228.4,125.2L227.9,125.2L227.4,125.2L226.9,125.2L226.4,125.4L225.9,125.4L225.4,125.4L224.9,125.4L224.4,125.4L223.9,124.7L223.4,124.7L222.9,124.7L222.4,124.6L221.9,124.8L221.4,124.8L220.9,124.8L220.4,124.8L219.9,125.1L219.4,125.1L218.9,125.1L218.4,125.1L217.9,126.1L217.4,126.1L216.9,126.1L216.4,126.1Z" fill="#0aab85"/>
<path d="M216.4,131.4L216.9,131.4L217.4,131.4L217.9,131.4L218.4,131.4L218.9,131.5L219.4,132.6L219.9,132.8L220.4,132.3L220.9,132.3L221.4,132.2L221.9,131.8L222.4,131.5L222.9,131.4L223.4,131.4L223.9,131.4L224.4,131.4L224.9,131.4L225.4,131.7L225.9,131.8L226.4,131.8L226.9,131.8L227.4,131.4L227.9,130.8L228.4,130.8L228.9,130.8L229.4,130.8L229.9,130.8L230.4,131.1L230.9,131.6L231.4,131.6L231.9,131.6L232.4,131.6L232.9,131.6L233.4,131.7L233.9,132L234.4,131.7L234.9,131.2L235.4,130.6L235.9,130.6L236.4,130.6L236.9,130.6L237.4,130.6L237.9,130.1L238.4,130.1L238.9,130.1L239.4,130.1L239.9,130.1L240.4,130.7L240.9,131.2L241.4,131.2L241.9,131.2L242.4,131.2L242.9,131.2L243.4,131.1L243.9,130.6L244.4,130.6L244.9,130.6L245.4,130.6L245.9,130.6L246.4,131.4L246.9,130.8L247.4,130.7L247.9,130.7L248.4,130.7L248.9,130.7L249.4,130.7L249.9,131.4L250.4,131.1L250.9,131.1L251.4,131.1L251.9,131.1L252.4,131.1L252.9,131.6L253.4,131.4L253.9,131.4L254.4,131.4L254.9,131.4L255.4,131.4L255.9,131.5L256.4,131.5L256.9,131.5L257.4,131.5L257.9,131.2L258.4,131.2L258.9,131.2L259.4,131.2L259.9,130.9L260.4,130.5L260.9,130.5L261.4,130.5L261.9,130.5L262.4,130.5L262.9,131.3L263.4,131.3L263.9,131.3L264.4,131.3L264.9,131.6L265.4,131.9L265.9,131.5L266.4,131L266.9,131L267.4,131L267.9,131L268.4,131L268.9,131.5L269.4,131.5L269.9,131L270.4,131L270.9,131L271.4,130.3L271.9,129.5L272.4,128.3L272.9,128.3L273.4,128.3L273.9,128.3L274.4,128.3L274.9,128.4L275.4,129L275.9,129.7L276.4,130.4L276.9,130.4L277.4,129.7L277.9,129L278.4,128.4L278.9,128.3L279.4,128.3L279.9,128.3L280.4,128.3L280.9,128.9L281.4,129.5L281.9,130.3L282.4,131L282.9,130.7L283.4,130L283.9,129.3L284.4,128.6L284.9,128.2L285.4,128.2L285.9,128.2L286.4,128.2L286.9,128.2L287.4,129.3L287.9,130L288.4,130.7L288.9,131L289.4,130.3L289.9,129.5L290.4,128.9L290.9,128.3L291.4,128.3L291.9,128.3L292.4,128.3L292.9,128.3L293.4,128.4L293.9,129.7L294.4,130.4L294.9,131.2L295.4,130.9L295.9,130.1L296.4,129.4L296.9,128.7L297.4,128.2L297.9,128.2L298.4,128.2L298.9,128.2L299.4,128.2L299.9,128.5L300.4,129.8L300.9,130.6L301.4,131.3L301.9,131.6L302.4,131.6L302.9,131.9L303.4,132L303.9,132.1L304.4,132.3L304.9,132.6L305.4,132.6L305.9,134.8L306.4,134.8L306.9,134.8L307.4,134.8L307.9,134.8L308.4,134.8L308.9,134.8L309.4,134.8L309.9,134.8L310.4,134.8L310.9,134.8L311.4,134.8L311.9,134.8L312.4,134.8L312.9,134.8L313.4,134.8L313.9,134.8L314.4,134.8L314.9,134.8L315.4,134.8L315.9,134.8L316.4,134.8L316.9,134.8L317.4,134.8L317.9,134.8L318.4,134.8L318.9,134.8L319.4,134.8L319.9,134.8L320.4,134.8L320.9,134.8L321.4,134.8L321.9,134.8L322.4,134.8L322.9,134.8L323.4,134.8L323.9,134.8L324.4,134.8L324.9,134.8L325.4,134.8L325.9,134.8L326.4,134.8L326.9,134.8L327.4,134.8L327.9,134.8L328.4,134.8L328.9,134.8L329.4,134.8L329.9,134.8L330.4,134.8L330.9,134.8L331.4,134.8L331.9,134.8L332.4,134.8L332.9,134.8L333.4,134.8L333.9,134.8L334.4,134.8L334.9,134.8L335.4,134.8L335.9,134.8L336.4,134.8L336.9,134.8L337.4,134.8L337.9,134.8L338.4,134.8L338.9,134.8L339.4,134.8L339.9,134.8L340.4,134.8L340.9,134.8L341.4,134.8L341.9,134.8L342.4,134.8L342.9,134.8L343.4,134.8L343.9,134.8L344.4,134.8L344.9,134.8L345.4,134.8L345.9,134.8L346.4,134.8L346.9,134.8L347.4,134.8L347.9,134.8L348.4,134.8L348.9,134.8L349.4,134.8L349.9,134.8L350.4,134.8L350.9,134.8L351.4,134.8L351.9,134.8L352.4,134.8L352.9,134.8L353.4,134.8L353.9,134.8L354.4,134.8L354.9,128.7L355.4,128.7L355.9,128.7L356.4,132.7L356.9,131.1L357.4,131.4L357.9,131.7L358.4,131.5L358.9,131.2L359.4,130.4L359.9,129.8L360.4,129.3L360.9,128.7L361.4,128.4L361.9,128.7L362.4,129.1L362.9,129.6L363.4,130.6L363.9,130.9L364.4,131.1L364.9,131.4L365.4,131.2L365.9,130.9L366.4,130.2L366.9,129.7L367.4,129.2L367.9,128.8L368.4,128.7L368.9,128.8L369.4,129.2L369.9,129.5L370.4,129.5L370.9,129.5L371.4,129.5L371.9,129.4L372.4,129.4L372.9,129.4L373.4,129.5L373.9,129.4L374.4,129.4L374.9,129.4L375.4,129.4L375.9,129.4L376.4,129.6L376.9,129.5L377.4,129.1L377.9,129.1L378.4,128.8L378.9,128.8L379.4,129L379.9,129.5L380.4,129.6L380.9,129.5L381.4,129.5L381.9,129.5L382.4,129.2L382.9,128.8L383.4,128.8L383.9,128.8L384.4,128.8L384.9,129.1L385.4,129.1L385.9,129.1L386.4,129.1L386.9,129.8L387.4,129.8L387.9,129.8L388.4,129.9L388.9,129.9L389.4,129.7L389.9,129.3L390.4,129.3L390.9,129.4L391.4,129.4L391.9,129.4L392.4,129.6L392.9,129.6L393.4,129.3L393.9,129.3L394.4,129.3L394.9,128.7L395.4,128.6L395.9,128.8L396.4,128.8L396.9,128.8L397.4,128.8L397.9,128.8L398.4,128.6L398.9,129.4L399.4,129.8L399.9,129.8L400.4,129.8L400.9,129.9L401.4,129.8L401.9,129.2L402.4,129.5L402.9,129.5L403.4,129.5L403.9,129.5L404.4,129.5L404.9,129.2L405.4,129.2L405.9,129.2L406.4,129.2L406.9,129.2L407.4,129.3L407.9,129.5L408.4,129.5L408.9,129.6L409.4,129.5L409.9,129.5L410.4,129.5L410.9,129.3L411.4,129.3L411.9,129.2L412.4,129.2L412.9,129.3L413.4,129.3L413.9,129.3L414.4,129.3L414.9,129.4L415.4,129.4L415.9,129.3L416.4,129.3L416.9,129.3L417.4,128.9L417.9,128.6L418.4,128.6L418.9,129.1L419.4,129.1L419.9,129.1L420.4,129.1L420.9,128.9L421.4,129.5L421.9,129.5L422.4,129.5L422.9,129.5L423.4,129.5L423.9,128.8L424.4,128.8L424.9,129.3L425.4,130.1L425.9,130.5L426.4,131L426.9,131.2L427.4,131.6L427.9,131.5L428.4,131.4L428.9,130.6L429.4,130.1L429.9,129.7L430.4,129.5L430.9,128.7L431.4,129L431.9,129.8L432.4,130.2L432.9,130.8L433.4,131.4L433.9,131.8L434.4,132L434.9,131.7L435.4,131.7L435.9,131.2L436.4,130.4L436.9,129.8L437.4,129.8L437.9,129.1L438.4,129.4L438.9,129.8L439.4,130.3L439.9,130.4L440.4,131L440.9,131L441.4,130.5L441.9,130.5L442.4,130L442.9,129.5L443.4,129L443.9,129.3L444.4,130.1L444.9,130.7L445.4,130.7L445.9,130.7L446.4,130.7L446.9,130L447.4,129.3L447.9,128.7L448.4,128.8L448.9,128.8L449.4,128.8L449.9,128.8L450.4,128.8L450.9,128.8L451.4,129.2L451.9,129.2L452.4,129.2L452.9,129.2L453.4,129.1L453.9,129L454.4,130L454.9,130.2L455.4,130.5L455.9,130.3L456.4,130.3L456.9,130.2L457.4,129.4L457.9,129.7L458.4,129.7L458.9,129.7L459.4,129.8L459.9,129.4L460.4,129.3L460.9,129.6L461.4,129.9L461.9,129.9L462.4,129.9L462.9,130.4L463.4,130.1L463.9,129.8L464.4,129.6L464.9,129.6L465.4,129.1L465.9,129.1L466.4,129.1L466.9,128.9L467.4,129.3L467.9,129.3L468.4,129.3L468.9,129.3L469.4,129.3L469.9,129.3L470.4,129.3L470.9,129.3L471.4,129.1L471.9,129.1L472.4,129.1L472.9,129.1L473.4,129.1L473.9,129.1L474.4,128.6L474.9,128.6L475.4,128.6L475.9,128.6L476.4,128.6L476.9,128.6L477.4,128.6L477.9,128.6L478.4,128.6L478.9,128.6L479.4,128.7L479.9,128.7L480.4,128.7L480.9,128.7L481.4,128.7L481.9,128.8L482.4,128.8L482.9,128.8L483.4,128.8L483.9,129L484.4,129L484.9,129L485.4,129L485.9,129L486.4,129L486.9,129.1L487.4,129.1L487.9,129.1L488.4,129.1L488.9,129L489.4,129L489.9,129L490.4,129L490.9,128.9L491.4,128.7L491.9,128.7L492.4,128.8L492.9,129.1L493.4,129.1L493.9,129.1L494.4,129L494.9,129L495.4,128.9L495.9,129.5L496.4,129.5L496.9,129.5L497.4,129.5L497.9,129.5L498.4,129L498.9,128.6L499.4,128.9L499.9,128.8L500.4,128.8L500.9,128.8L501.4,128.8L501.9,128.8L502.4,128.9L502.9,128.8L503.4,129.4L503.9,129.4L504.4,129.4L504.9,129.4L505.4,129.5L505.9,128.8L506.4,128.8L506.9,128.8L507.4,128.7L507.9,128.7L508.4,129.3L508.9,129.5L509.4,129.5L509.9,129.5L510.4,129.5L510.9,129.5L511.4,129.3L511.9,129.3L512.4,129.3L512.9,129.3L513.4,129L513.9,129L514.4,129L514.9,129L515.4,129L515.9,129.2L516.4,129.2L516.9,129.2L517.4,129.3L517.9,129.3L518.4,128.6L518.9,128.6L519.4,128.9L519.9,128.9L520.4,128.9L520.9,128.9L521.4,128.9L521.9,128.9L522.4,128.5L522.9,128.5L523.4,128.5L523.9,128.5L524.4,128.5L524.9,129.5L525.4,130.2L525.9,129.5L526.4,129.5L526.9,131L527.4,131.8L527.9,131.6L528.4,131.4L528.9,131.4L529.4,131.4L529.9,131.4L530.4,131.4L530.9,131.4L531.4,131.4L531.9,131.4L532.4,131.4L532.9,131.4L533.4,131.4L533.9,131.4L534.4,132.1L534.9,132.4L535.4,132L535.9,131.2L536.4,131.2L536.9,131.2L537.4,131.2L537.9,131.2L538.4,131.2L538.9,131.6L539.4,132.1L539.9,132.5L540.4,132L540.9,131.4L541.4,131L541.9,131L542.4,131L542.9,131L543.4,131L543.9,131.4L544.4,132.2L544.9,132.3L545.4,132.1L545.9,132L546.4,131.9L546.9,131.9L547.4,131.9L547.9,131.9L548.4,131.9L548.9,131.9L549.4,131.9L549.9,131.9L550.4,131.9L550.9,131.5L551.4,131.5L551.9,131.5L552.4,131.5L552.9,131.5L553.4,131.7L553.9,131.9L554.4,132L554.9,131.6L555.4,131.4L555.9,131.3L556.4,131.3L556.9,131.3L557.4,131.3L557.9,131.3L558.4,131.3L558.9,131.3L559.4,131.3L559.9,131.3L560.4,131.3L560.9,131.3L561.4,131.3L561.9,131.3L562.4,131.3L562.9,131.3L563.4,131.5L563.9,131.5L564.4,131.5L564.9,131.8L565.4,131.8L565.9,132L566.4,132L566.9,132L567.4,132.2L567.9,132.1L568.4,132.1L568.9,132.1L569.4,132.1L569.9,131.8L570.4,131.4L570.9,131.4L571.4,131.4L571.9,131.4L572.4,131.4L572.9,131.8L573.4,132.2L573.9,132.4L574.4,132L574.9,132L575.4,132L575.9,132L576.4,132L576.9,132.7L577.4,132.7L577.9,132.7L578.4,132.7L578.9,132.7L579.4,132.7L579.9,133.2L580.4,133.2L580.9,133.5L581.4,133.6L581.9,133.6L582.4,133.6L582.9,133.6L583.4,133.9L583.9,133.9L584.4,134L584.9,134.2L585.4,134.4L585.9,134.4L586.4,134.6L586.9,134.7L587.4,134.8L587.9,134.8L588.4,134.8L588.9,134.8L589.4,134.8L589.9,134.8L590.4,134.8L590.9,134.8L591.4,134.8L591.9,134.8L592.4,134.8L592.9,134.8L593.4,134.8L593.9,134.8L594.4,134.8L594.9,134.8L595.4,134.8L595.9,134.8L596.4,134.8L596.9,134.8L597.4,134.8L597.9,134.8L598.4,134.8L598.9,134.8L598.9,134.8L598.4,134.8L597.9,134.8L597.4,134.8L596.9,134.8L596.4,134.8L595.9,134.8L595.4,134.8L594.9,134.8L594.4,134.8L593.9,134.8L593.4,134.8L592.9,134.8L592.4,134.8L591.9,134.8L591.4,134.8L590.9,134.8L590.4,134.8L589.9,134.8L589.4,134.8L588.9,134.8L588.4,134.8L587.9,134.8L587.4,134.8L586.9,134.9L586.4,134.9L585.9,135.1L585.4,135.2L584.9,135.4L584.4,135.4L583.9,135.4L583.4,135.6L582.9,135.9L582.4,135.9L581.9,136L581.4,136.2L580.9,136.2L580.4,136.2L579.9,136.7L579.4,136.7L578.9,136.9L578.4,136.9L577.9,136.9L577.4,137.2L576.9,137.2L576.4,137.2L575.9,137.7L575.4,137.7L574.9,137.7L574.4,138.2L573.9,138.2L573.4,138.2L572.9,138.2L572.4,138.2L571.9,138.1L571.4,138.5L570.9,138.5L570.4,138.5L569.9,138.5L569.4,138.5L568.9,138.3L568.4,138.2L567.9,138.2L567.4,138.2L566.9,138.4L566.4,138.4L565.9,138.4L565.4,138.4L564.9,138.4L564.4,138.2L563.9,138.2L563.4,138.2L562.9,138.2L562.4,138.2L561.9,138.2L561.4,138.1L560.9,138.2L560.4,138.2L559.9,138.2L559.4,138.2L558.9,138.3L558.4,138.3L557.9,138.3L557.4,138.3L556.9,138.3L556.4,138L555.9,138L555.4,138L554.9,137.9L554.4,137.9L553.9,137.9L553.4,138.4L552.9,138.4L552.4,138.4L551.9,138.4L551.4,138.1L550.9,138.2L550.4,138.2L549.9,138.2L549.4,138.2L548.9,138.2L548.4,137.8L547.9,137.8L547.4,137.8L546.9,137.8L546.4,137.8L545.9,137.8L545.4,137.8L544.9,137.8L544.4,137.8L543.9,138.2L543.4,138.5L542.9,138.5L542.4,138.5L541.9,138.5L541.4,138.5L540.9,138.2L540.4,137.8L539.9,137.4L539.4,137.6L538.9,137.8L538.4,138L537.9,138.2L537.4,138.7L536.9,138.7L536.4,138.7L535.9,138.7L535.4,138.7L534.9,138.6L534.4,138.6L533.9,139L533.4,139L532.9,139L532.4,139L531.9,139L531.4,139L530.9,138.8L530.4,138.7L529.9,138.5L529.4,138.4L528.9,138.1L528.4,138.2L527.9,138.2L527.4,138.5L526.9,139.4L526.4,139.4L525.9,139.8L525.4,139.8L524.9,139.8L524.4,139.8L523.9,141.1L523.4,141L522.9,140.3L522.4,140.3L521.9,140.3L521.4,140.3L520.9,140.3L520.4,140.8L519.9,141L519.4,141L518.9,141L518.4,141L517.9,140.8L517.4,140.7L516.9,140.7L516.4,140.7L515.9,140.8L515.4,140.8L514.9,140.8L514.4,140.8L513.9,140.9L513.4,140.9L512.9,141L512.4,141L511.9,141L511.4,140.8L510.9,140.7L510.4,140.7L509.9,140.7L509.4,140.7L508.9,140.7L508.4,140.8L507.9,140.8L507.4,140.8L506.9,140.4L506.4,140.4L505.9,140.4L505.4,140.4L504.9,140.4L504.4,140.6L503.9,140.6L503.4,140.6L502.9,140.6L502.4,140.6L501.9,140.6L501.4,140.6L500.9,140.5L500.4,140.6L499.9,141L499.4,141.1L498.9,140.5L498.4,140.5L497.9,140.5L497.4,140.5L496.9,140.5L496.4,140.5L495.9,140.5L495.4,140.5L494.9,140.5L494.4,140.5L493.9,140.6L493.4,140.6L492.9,140.6L492.4,140.9L491.9,140.9L491.4,140.9L490.9,140.9L490.4,140.7L489.9,140.7L489.4,140.7L488.9,140.7L488.4,140.5L487.9,140.5L487.4,140.5L486.9,140.5L486.4,141L485.9,141L485.4,140.9L484.9,140.9L484.4,140.9L483.9,140.9L483.4,140.6L482.9,140.6L482.4,140.6L481.9,140.6L481.4,140.4L480.9,140.4L480.4,140.4L479.9,140.4L479.4,140.4L478.9,141.1L478.4,140.7L477.9,140.7L477.4,140.7L476.9,140.6L476.4,140.7L475.9,140.7L475.4,140.7L474.9,141.1L474.4,141.1L473.9,141.1L473.4,141L472.9,141.1L472.4,141.1L471.9,141.2L471.4,140.8L470.9,140.7L470.4,140.7L469.9,140.7L469.4,140.7L468.9,140.7L468.4,140.9L467.9,141.1L467.4,141.1L466.9,141.1L466.4,141.1L465.9,140.9L465.4,140.8L464.9,140.8L464.4,140.5L463.9,139.8L463.4,139.8L462.9,139.8L462.4,140L461.9,139.8L461.4,139.8L460.9,139.9L460.4,139.9L459.9,139.9L459.4,139.4L458.9,139.4L458.4,139.4L457.9,139.4L457.4,139.2L456.9,139.4L456.4,139.4L455.9,139.1L455.4,139.4L454.9,139.5L454.4,139.6L453.9,140.6L453.4,141L452.9,140.3L452.4,140.3L451.9,140.3L451.4,140.3L450.9,140.3L450.4,140.7L449.9,140.7L449.4,140.7L448.9,140.7L448.4,140.7L447.9,141.1L447.4,141.2L446.9,140.5L446.4,139L445.9,139L445.4,139L444.9,138.9L444.4,138.9L443.9,139.7L443.4,140.3L442.9,139.5L442.4,139.1L441.9,138.9L441.4,138.7L440.9,138.4L440.4,138.6L439.9,139L439.4,139.5L438.9,139.9L438.4,140.3L437.9,140.9L437.4,140.9L436.9,140.7L436.4,139.9L435.9,139.3L435.4,138.9L434.9,138.4L434.4,137.6L433.9,137.4L433.4,137.4L432.9,137.6L432.4,137.7L431.9,138.2L431.4,138.9L430.9,139.3L430.4,139L429.9,138.3L429.4,137.9L428.9,137.8L428.4,137.6L427.9,137.5L427.4,137.7L426.9,138.3L426.4,138.9L425.9,139.4L425.4,139.8L424.9,140.5L424.4,140.9L423.9,141L423.4,141L422.9,141L422.4,141L421.9,141L421.4,141.1L420.9,141.1L420.4,141.1L419.9,141.1L419.4,141.1L418.9,141.1L418.4,141L417.9,140.4L417.4,140.4L416.9,140.4L416.4,140.4L415.9,140.4L415.4,140.4L414.9,140.4L414.4,140.4L413.9,140.4L413.4,140.7L412.9,140.7L412.4,140.7L411.9,140.6L411.4,140.6L410.9,140.6L410.4,140.6L409.9,140.4L409.4,140.4L408.9,140.4L408.4,140.4L407.9,140.4L407.4,140.6L406.9,140.6L406.4,140.6L405.9,140.4L405.4,140.7L404.9,140.7L404.4,140.4L403.9,140.4L403.4,140.4L402.9,140.4L402.4,140.4L401.9,140.6L401.4,139.8L400.9,139.8L400.4,139.8L399.9,139.8L399.4,139.8L398.9,140.8L398.4,140.8L397.9,140.8L397.4,140.7L396.9,140.6L396.4,140.6L395.9,140.6L395.4,140.5L394.9,140.5L394.4,140.5L393.9,140.6L393.4,140.6L392.9,140.8L392.4,140.8L391.9,141.3L391.4,141.3L390.9,141.2L390.4,141.2L389.9,140.9L389.4,140.7L388.9,140.6L388.4,140.7L387.9,140.7L387.4,140.7L386.9,140.7L386.4,140.7L385.9,140.7L385.4,140.7L384.9,140.7L384.4,140.9L383.9,141.2L383.4,141.2L382.9,141.2L382.4,141.2L381.9,141.1L381.4,141L380.9,141L380.4,141L379.9,140.8L379.4,140.8L378.9,140.8L378.4,140.8L377.9,140.8L377.4,141.1L376.9,141.1L376.4,140.9L375.9,140.9L375.4,140.9L374.9,140.9L374.4,140.9L373.9,141.1L373.4,141.1L372.9,141.1L372.4,141.1L371.9,141.1L371.4,140.8L370.9,140.8L370.4,140.8L369.9,140.8L369.4,141L368.9,141.2L368.4,140.3L367.9,139.9L367.4,139.4L366.9,138.9L366.4,138.4L365.9,138.2L365.4,138.2L364.9,138.7L364.4,139L363.9,139.5L363.4,139.9L362.9,140.8L362.4,141.3L361.9,141.3L361.4,140.9L360.9,140.3L360.4,139.8L359.9,139.3L359.4,138.5L358.9,137.9L358.4,137.6L357.9,137.7L357.4,138L356.9,138.3L356.4,137L355.9,141L355.4,141L354.9,141L354.4,134.8L353.9,134.8L353.4,134.8L352.9,134.8L352.4,134.8L351.9,134.8L351.4,134.8L350.9,134.8L350.4,134.8L349.9,134.8L349.4,134.8L348.9,134.8L348.4,134.8L347.9,134.8L347.4,134.8L346.9,134.8L346.4,134.8L345.9,134.8L345.4,134.8L344.9,134.8L344.4,134.8L343.9,134.8L343.4,134.8L342.9,134.8L342.4,134.8L341.9,134.8L341.4,134.8L340.9,134.8L340.4,134.8L339.9,134.8L339.4,134.8L338.9,134.8L338.4,134.8L337.9,134.8L337.4,134.8L336.9,134.8L336.4,134.8L335.9,134.8L335.4,134.8L334.9,134.8L334.4,134.8L333.9,134.8L333.4,134.8L332.9,134.8L332.4,134.8L331.9,134.8L331.4,134.8L330.9,134.8L330.4,134.8L329.9,134.8L329.4,134.8L328.9,134.8L328.4,134.8L327.9,134.8L327.4,134.8L326.9,134.8L326.4,134.8L325.9,134.8L325.4,134.8L324.9,134.8L324.4,134.8L323.9,134.8L323.4,134.8L322.9,134.8L322.4,134.8L321.9,134.8L321.4,134.8L320.9,134.8L320.4,134.8L319.9,134.8L319.4,134.8L318.9,134.8L318.4,134.8L317.9,134.8L317.4,134.8L316.9,134.8L316.4,134.8L315.9,134.8L315.4,134.8L314.9,134.8L314.4,134.8L313.9,134.8L313.4,134.8L312.9,134.8L312.4,134.8L311.9,134.8L311.4,134.8L310.9,134.8L310.4,134.8L309.9,134.8L309.4,134.8L308.9,134.8L308.4,134.8L307.9,134.8L307.4,134.8L306.9,134.8L306.4,134.8L305.9,134.8L305.4,137.9L304.9,137.9L304.4,138.5L303.9,138.5L303.4,138.5L302.9,138.5L302.4,138.8L301.9,138.8L301.4,138.8L300.9,139.2L300.4,139.9L299.9,141.2L299.4,141.4L298.9,141.4L298.4,141.4L297.9,141.4L297.4,141.4L296.9,141L296.4,140.3L295.9,139.6L295.4,138.9L294.9,138.9L294.4,139.3L293.9,140L293.4,141.4L292.9,141.4L292.4,141.4L291.9,141.4L291.4,141.4L290.9,141.4L290.4,140.9L289.9,140.2L289.4,139.5L288.9,138.9L288.4,139L287.9,139.8L287.4,140.5L286.9,141.4L286.4,141.4L285.9,141.4L285.4,141.4L284.9,141.4L284.4,141.1L283.9,140.5L283.4,139.8L282.9,139L282.4,138.9L281.9,139.5L281.4,140.2L280.9,140.9L280.4,141.4L279.9,141.4L279.4,141.4L278.9,141.4L278.4,141.4L277.9,140.7L277.4,140L276.9,139.3L276.4,139.3L275.9,140L275.4,140.7L274.9,141.4L274.4,141.4L273.9,141.4L273.4,141.4L272.9,141.4L272.4,141.4L271.9,140.2L271.4,139.5L270.9,139.1L270.4,139.1L269.9,139.1L269.4,139.5L268.9,139.5L268.4,139.5L267.9,139.5L267.4,139.5L266.9,139L266.4,139L265.9,139L265.4,139L264.9,139.7L264.4,139.7L263.9,139.7L263.4,139.7L262.9,139.7L262.4,139.3L261.9,139.3L261.4,139.3L260.9,139.3L260.4,139.3L259.9,139.3L259.4,139.2L258.9,139.2L258.4,139.2L257.9,139L257.4,139L256.9,139L256.4,139L255.9,139L255.4,139L254.9,139.5L254.4,139.5L253.9,139.5L253.4,139.5L252.9,139.5L252.4,139.5L251.9,139.5L251.4,139.5L250.9,139.8L250.4,139.8L249.9,139.8L249.4,139.8L248.9,139.8L248.4,139L247.9,139L247.4,139L246.9,139.1L246.4,139.8L245.9,139.8L245.4,139.8L244.9,139.8L244.4,139.8L243.9,139.5L243.4,139.5L242.9,139.5L242.4,139.5L241.9,139.5L241.4,139.5L240.9,139.5L240.4,139.5L239.9,139.5L239.4,139L238.9,139L238.4,139L237.9,139.1L237.4,139.1L236.9,139.1L236.4,139.1L235.9,139.1L235.4,138.5L234.9,138.7L234.4,138.7L233.9,138.7L233.4,138.8L232.9,138.8L232.4,138.8L231.9,138.8L231.4,138.8L230.9,138.9L230.4,138.9L229.9,138.9L229.4,138.9L228.9,138.9L228.4,138.7L227.9,138.7L227.4,138.7L226.9,138.7L226.4,138.9L225.9,138.9L225.4,138.9L224.9,138.9L224.4,138.9L223.9,138.2L223.4,138.2L222.9,138.2L222.4,138.1L221.9,138.3L221.4,138.3L220.9,138.3L220.4,138.3L219.9,138.6L219.4,138.6L218.9,138.6L218.4,138.6L217.9,139.6L217.4,139.6L216.9,139.6L216.4,139.6Z" fill="#0aab85"/>
<rect x="548" y="114" width="52" height="28" fill="#021c1c" opacity="0.62"/>
<rect x="304.5" y="114" width="1.2" height="27.5" fill="#e8ecec"/>
<rect x="212" y="141" width="388" height="1" fill="#10302e"/>
<!-- main channels -->
<rect x="212" y="142" width="388" height="172.5" fill="url(#gch)"/>
<rect x="212" y="314.5" width="388" height="172" fill="url(#gch)"/>
<line x1="242.5" y1="142" x2="242.5" y2="486" stroke="#182725" stroke-width="1"/>
<line x1="272.5" y1="142" x2="272.5" y2="486" stroke="#182725" stroke-width="1"/>
<line x1="303.5" y1="142" x2="303.5" y2="486" stroke="#182725" stroke-width="1"/>
<line x1="333.5" y1="142" x2="333.5" y2="486" stroke="#182725" stroke-width="1"/>
<line x1="363.5" y1="142" x2="363.5" y2="486" stroke="#182725" stroke-width="1"/>
<line x1="393.5" y1="142" x2="393.5" y2="486" stroke="#182725" stroke-width="1"/>
<line x1="423.5" y1="142" x2="423.5" y2="486" stroke="#182725" stroke-width="1"/>
<line x1="453.5" y1="142" x2="453.5" y2="486" stroke="#182725" stroke-width="1"/>
<line x1="484.5" y1="142" x2="484.5" y2="486" stroke="#182725" stroke-width="1"/>
<line x1="514.5" y1="142" x2="514.5" y2="486" stroke="#182725" stroke-width="1"/>
<line x1="544.5" y1="142" x2="544.5" y2="486" stroke="#182725" stroke-width="1"/>
<line x1="574.5" y1="142" x2="574.5" y2="486" stroke="#182725" stroke-width="1"/>
<line x1="212" y1="150.5" x2="600" y2="150.5" stroke="#182725" stroke-width="1"/>
<line x1="212" y1="176.5" x2="600" y2="176.5" stroke="#182725" stroke-width="1"/>
<line x1="212" y1="202.5" x2="600" y2="202.5" stroke="#182725" stroke-width="1"/>
<line x1="212" y1="228.5" x2="600" y2="228.5" stroke="#182725" stroke-width="1"/>
<line x1="212" y1="254.5" x2="600" y2="254.5" stroke="#182725" stroke-width="1"/>
<line x1="212" y1="280.5" x2="600" y2="280.5" stroke="#182725" stroke-width="1"/>
<line x1="212" y1="306.5" x2="600" y2="306.5" stroke="#182725" stroke-width="1"/>
<line x1="212" y1="323.5" x2="600" y2="323.5" stroke="#182725" stroke-width="1"/>
<line x1="212" y1="349.5" x2="600" y2="349.5" stroke="#182725" stroke-width="1"/>
<line x1="212" y1="375.5" x2="600" y2="375.5" stroke="#182725" stroke-width="1"/>
<line x1="212" y1="401.5" x2="600" y2="401.5" stroke="#182725" stroke-width="1"/>
<line x1="212" y1="427.5" x2="600" y2="427.5" stroke="#182725" stroke-width="1"/>
<line x1="212" y1="453.5" x2="600" y2="453.5" stroke="#182725" stroke-width="1"/>
<line x1="212" y1="479.5" x2="600" y2="479.5" stroke="#182725" stroke-width="1"/>
<rect x="212" y="314" width="388" height="1" fill="#0a3530"/>
<path d="M216.5,228L217,208.3L217.5,194.4L218,183.5L218.5,185.1L219,194.2L219.5,199.1L220,204.9L220.5,208L221,202.3L221.5,210.4L222,202.4L222.5,195.9L223,206.6L223.5,201.5L224,194.9L224.5,189.7L225,184.8L225.5,184.1L226,188.2L226.5,194.1L227,193.3L227.5,192.1L228,188.7L228.5,191.9L229,195.7L229.5,196.1L230,195.6L230.5,191.5L231,183.8L231.5,176.3L232,180.3L232.5,187.3L233,194.5L233.5,194.4L234,194L234.5,191.1L235,186.3L235.5,187.3L236,192.2L236.5,197.7L237,196.3L237.5,195.2L238,193.3L238.5,193.4L239,187.6L239.5,181.3L240,174.1L240.5,182L241,189.6L241.5,197.1L242,192L242.5,179.9L243,167.3L243.5,174.6L244,185.9L244.5,194.7L245,193.8L245.5,189.4L246,185.6L246.5,181.8L247,185.8L247.5,190.6L248,195.7L248.5,196.3L249,189.3L249.5,179.4L250,173.6L250.5,183.6L251,191.1L251.5,195.1L252,193.5L252.5,192.5L253,184.9L253.5,176.7L254,174.7L254.5,184.5L255,193L255.5,196.6L256,197.7L256.5,191.5L257,184.1L257.5,179.9L258,187L258.5,193.1L259,193.1L259.5,192L260,191.1L260.5,187.3L261,183.5L261.5,187.5L262,192.3L262.5,195.1L263,190.9L263.5,185.5L264,188.3L264.5,192.8L265,191.7L265.5,186.4L266,181.8L266.5,185.8L267,189.5L267.5,192.6L268,186.1L268.5,177.5L269,172.4L269.5,182.5L270,193.5L270.5,195.3L271,189.1L271.5,183L272,186.3L272.5,190L273,192.9L273.5,191.7L274,192.3L274.5,192.9L275,190.5L275.5,185.3L276,179.3L276.5,185.6L277,194.2L277.5,197.6L278,197.4L278.5,195.8L279,193.4L279.5,185L280,178.8L280.5,182.1L281,179.1L281.5,169.3L282,159.9L282.5,151.1L283,143.2L283.5,144.7L284,152.8L284.5,161.7L285,171.2L285.5,181.1L286,191.3L286.5,188.7L287,191.3L287.5,181.1L288,171.2L288.5,161.7L289,152.8L289.5,144.7L290,143.2L290.5,151.1L291,159.9L291.5,169.3L292,179.1L292.5,189.3L293,189.5L293.5,185.2L294,189.5L294.5,185.2L295,175.1L295.5,165.4L296,156.3L296.5,147.8L297,142.5L297.5,147.8L298,156.3L298.5,165.4L299,175.1L299.5,185.2L300,188.9L300.5,184.4L301,187.1L301.5,189.3L302,179.1L302.5,169.3L303,159.9L303.5,151.1L304,143.2L304.5,144.7L305,152.8L305.5,161.7L306,171.2L306.5,181.1L307,191.3L307.5,189.5L308,185.2L308.5,189.5L309,187.2L309.5,177.1L310,167.3L310.5,158.1L311,149.4L311.5,142.5L312,146.2L312.5,154.5L313,163.6L313.5,173.2L314,183.1L314.5,191.1L315,187L315.5,191.1L316,191.6L316.5,192L317,193.1L317.5,195.6L318,198.9L318.5,200L319,228L319.5,228L320,228L320.5,228L321,228L321.5,228L322,228L322.5,228L323,228L323.5,228L324,228L324.5,228L325,228L325.5,228L326,228L326.5,228L327,228L327.5,228L328,228L328.5,228L329,228L329.5,228L330,228L330.5,228L331,228L331.5,228L332,228L332.5,228L333,228L333.5,228L334,228L334.5,228L335,228L335.5,228L336,228L336.5,228L337,228L337.5,228L338,228L338.5,228L339,228L339.5,228L340,228L340.5,228L341,228L341.5,228L342,228L342.5,228L343,228L343.5,228L344,228L344.5,228L345,228L345.5,228L346,228L346.5,228L347,228L347.5,228L348,228L348.5,228L349,228L349.5,228L350,228L350.5,228L351,228L351.5,228L352,228L352.5,228L353,228L353.5,228L354,228L354.5,228L355,228L355.5,228L356,228L356.5,228L357,228L357.5,228L358,228L358.5,228L359,228L359.5,228L360,228L360.5,228L361,228L361.5,228L362,228L362.5,228L363,228L363.5,228L364,228L364.5,228L365,228L365.5,228L366,228L366.5,228L367,228L367.5,228L368,228L368.5,228L369,228L369.5,228L370,228L370.5,228L371,228L371.5,228L372,228L372.5,228L373,228L373.5,228L374,228L374.5,228L375,228L375.5,228L376,228L376.5,228L377,228L377.5,228L378,149.2L378.5,160.5L379,171.7L379.5,183L380,194.2L380.5,196.5L381,185.2L381.5,174L382,162.7L382.5,151.5L383,142.5L383.5,142.5L384,142.5L384.5,142.5L385,142.5L385.5,142.5L386,150.4L386.5,160.2L387,170L387.5,179.8L388,189.6L388.5,191.6L389,181.8L389.5,172L390,162.1L390.5,152.3L391,142.5L391.5,143.8L392,150.4L392.5,143.8L393,142.5L393.5,142.5L394,149.1L394.5,160.2L395,166.8L395.5,155.8L396,144.7L396.5,142.7L397,142.5L397.5,142.5L398,142.5L398.5,142.5L399,142.5L399.5,142.5L400,142.5L400.5,143.2L401,149.5L401.5,158.3L402,160L402.5,151.3L403,142.5L403.5,142.5L404,142.5L404.5,142.5L405,150.8L405.5,154.2L406,157.9L406.5,150.2L407,142.5L407.5,142.5L408,142.5L408.5,142.6L409,147.3L409.5,144.3L410,142.5L410.5,142.5L411,142.5L411.5,142.5L412,145L412.5,143.8L413,142.5L413.5,142.5L414,145.3L414.5,159.3L415,173.2L415.5,170.5L416,156.5L416.5,145.2L417,149.5L417.5,142.6L418,142.5L418.5,142.5L419,142.5L419.5,142.5L420,144.9L420.5,154.1L421,163.8L421.5,161.9L422,152.2L422.5,142.5L423,142.5L423.5,142.5L424,142.5L424.5,142.5L425,151.5L425.5,153.5L426,142.5L426.5,142.5L427,142.5L427.5,142.5L428,142.5L428.5,149.6L429,161.4L429.5,173.3L430,161.4L430.5,152.1L431,142.5L431.5,142.5L432,142.5L432.5,142.5L433,153.1L433.5,147.6L434,142.5L434.5,142.5L435,142.5L435.5,142.5L436,142.5L436.5,142.5L437,153.5L437.5,150.4L438,153L438.5,163.5L439,153L439.5,142.5L440,142.5L440.5,142.5L441,147L441.5,153.7L442,150.4L442.5,160.2L443,154.3L443.5,144.5L444,142.5L444.5,144.2L445,152.8L445.5,157.9L446,149.3L446.5,142.5L447,142.5L447.5,147.3L448,155.3L448.5,147.3L449,142.5L449.5,142.8L450,143.3L450.5,142.5L451,142.5L451.5,142.5L452,142.5L452.5,145.1L453,154.4L453.5,146.7L454,142.5L454.5,142.5L455,143.7L455.5,144.3L456,142.5L456.5,142.5L457,142.5L457.5,145.6L458,153.4L458.5,161.2L459,168.9L459.5,176.7L460,184.5L460.5,192.2L461,187.6L461.5,179.8L462,172L462.5,164.3L463,156.5L463.5,148.7L464,142.5L464.5,142.5L465,144.3L465.5,149L466,157.2L466.5,165.3L467,173.5L467.5,181.6L468,189.8L468.5,197.9L469,193L469.5,184.9L470,176.7L470.5,168.6L471,160.4L471.5,152.3L472,144.1L472.5,142.5L473,142.5L473.5,144.5L474,154.4L474.5,164.3L475,174.2L475.5,184.1L476,186.1L476.5,176.2L477,166.3L477.5,156.4L478,146.5L478.5,146.7L479,144.6L479.5,142.5L480,150.3L480.5,163.2L481,176.1L481.5,189L482,176.1L482.5,163.2L483,150.3L483.5,142.5L484,142.5L484.5,142.5L485,142.5L485.5,152.2L486,153.3L486.5,142.5L487,142.5L487.5,142.5L488,142.5L488.5,150.8L489,159L489.5,150.8L490,142.6L490.5,145.6L491,143.6L491.5,142.5L492,145.7L492.5,161.6L493,177.4L493.5,180.6L494,164.7L494.5,148.9L495,142.5L495.5,142.5L496,150.5L496.5,170.6L497,159.6L497.5,142.5L498,142.5L498.5,144.4L499,148.6L499.5,142.9L500,153.6L500.5,164.6L501,175.7L501.5,173.5L502,162.4L502.5,151.4L503,142.5L503.5,142.5L504,152.7L504.5,158.8L505,155.4L505.5,152.7L506,142.5L506.5,142.5L507,142.5L507.5,142.5L508,142.5L508.5,143.7L509,147.8L509.5,156.6L510,147.8L510.5,142.5L511,142.5L511.5,142.5L512,142.5L512.5,151.9L513,150.5L513.5,145.5L514,147.7L514.5,144L515,142.5L515.5,142.5L516,142.5L516.5,142.8L517,144.2L517.5,147.8L518,148.9L518.5,143.6L519,142.5L519.5,142.5L520,142.5L520.5,142.5L521,147.7L521.5,151L522,148.1L522.5,151.4L523,145.8L523.5,142.5L524,142.5L524.5,149.5L525,148.3L525.5,142.5L526,142.5L526.5,143.2L527,143.5L527.5,142.5L528,142.5L528.5,143.7L529,146.8L529.5,146.6L530,158.9L530.5,144.9L531,142.5L531.5,142.5L532,142.5L532.5,142.5L533,142.5L533.5,142.9L534,150L534.5,145L535,142.5L535.5,142.5L536,144.1L536.5,152.2L537,157.1L537.5,149L538,143.4L538.5,151.8L539,144.9L539.5,142.5L540,142.5L540.5,152L541,151.1L541.5,142.5L542,142.5L542.5,142.5L543,142.5L543.5,142.5L544,142.5L544.5,142.7L545,143.9L545.5,142.8L546,148.1L546.5,153.8L547,148.1L547.5,142.5L548,142.5L548.5,144.5L549,145.3L549.5,142.5L550,142.5L550.5,146.8L551,152.7L551.5,142.5L552,142.5L552.5,142.5L553,142.5L553.5,147.1L554,150.2L554.5,146.1L555,142.5L555.5,142.5L556,142.5L556.5,142.5L557,142.5L557.5,144.7L558,152.4L558.5,156.6L559,142.5L559.5,142.5L560,142.5L560.5,143.8L561,150L561.5,151.3L562,146.5L562.5,142.9L563,147.4L563.5,159.7L564,162.1L564.5,149.9L565,142.5L565.5,142.5L566,142.5L566.5,142.5L567,142.5L567.5,142.5L568,143.4L568.5,143.8L569,146.8L569.5,143.7L570,142.5L570.5,142.5L571,142.5L571.5,143.2L572,143.2L572.5,142.5L573,142.5L573.5,142.5L574,168.1L574.5,181.1L575,181.2L575.5,181.4L576,181.6L576.5,181.7L577,180.6L577.5,177.4L578,174.3L578.5,174.6L579,179.9L579.5,185.2L580,182.4L580.5,179.5L581,176.6L581.5,173.7L582,174.2L582.5,179.8L583,185.4L583.5,191L584,195.1L584.5,193.3L585,191.4L585.5,189.5L586,183.5L586.5,177.4L587,171.4L587.5,170.6L588,177.8L588.5,184.9L589,192.1L589.5,193.8L590,195.5L590.5,197.2L591,198.9L591.5,193.7L592,184L592.5,174.2L593,167.7L593.5,174L594,180.3L594.5,186.6L595,188.3L595.5,188.9L596,189.6L596.5,189.4L597,188L597.5,186.6L598,185.2L598.5,183.4L599,181.5L599.5,183.4L600,186.9L600,275.8L599.5,275.6L599,275.7L598.5,275.7L598,275.7L597.5,275.8L597,275.8L596.5,275.8L596,275.9L595.5,275L595,274.1L594.5,273.2L594,276L593.5,281.2L593,286.4L592.5,281.9L592,275L591.5,268.1L591,264.3L590.5,265.4L590,266.5L589.5,268L589,269.5L588.5,271.5L588,275.1L587.5,278.7L587,282.3L586.5,285.9L586,289.6L585.5,287.9L585,286.1L584.5,284.4L584,282.7L583.5,285.6L583,288.5L582.5,291.5L582,294.4L581.5,294.1L581,291.7L580.5,289.2L580,286.8L579.5,284.4L579,282L578.5,274.2L578,262.8L577.5,256L577,267.8L576.5,279.5L576,282.1L575.5,282.3L575,282.5L574.5,285.8L574,301.2L573.5,283.3L573,307.4L572.5,312.2L572,311.5L571.5,307.6L571,309.8L570.5,312.2L570,306.7L569.5,292.5L569,303.1L568.5,310.5L568,312.2L567.5,312.2L567,306.8L566.5,306.4L566,312.2L565.5,310.2L565,306.2L564.5,307.7L564,301.6L563.5,302.9L563,309.6L562.5,310.4L562,309.7L561.5,303.5L561,304.8L560.5,311L560,310.8L559.5,311.2L559,312.2L558.5,308.8L558,305.7L557.5,311.2L557,312.2L556.5,310.8L556,302.2L555.5,300.4L555,311.7L554.5,312.2L554,308.2L553.5,302.1L553,310L552.5,312.2L552,312.2L551.5,304.5L551,294.5L550.5,298.5L550,312.2L549.5,312.2L549,312.2L548.5,311.7L548,298.7L547.5,302.4L547,312.2L546.5,303.1L546,297.9L545.5,305.6L545,310L544.5,307.7L544,310.1L543.5,312.2L543,312.2L542.5,308.7L542,296.7L541.5,306.2L541,312.2L540.5,312.2L540,312.2L539.5,303.2L539,296.3L538.5,310.2L538,312.2L537.5,306.4L537,299.2L536.5,303.5L536,310.8L535.5,312.2L535,312.2L534.5,308.2L534,303.7L533.5,310.6L533,312.2L532.5,306.8L532,301.1L531.5,310.3L531,312.2L530.5,307.2L530,296.6L529.5,307L529,308.4L528.5,310.7L528,307L527.5,308.2L527,312.2L526.5,311.7L526,304.5L525.5,307L525,312.2L524.5,308.2L524,299L523.5,308.6L523,312.2L522.5,307.1L522,298.3L521.5,294L521,308.6L520.5,312.2L520,310.5L519.5,310.2L519,312.2L518.5,307.5L518,299.6L517.5,300.6L517,299.9L516.5,309.2L516,312.2L515.5,312.2L515,311.2L514.5,307.9L514,309.6L513.5,308.4L513,310.4L512.5,310L512,311.8L511.5,312.2L511,312.2L510.5,312.2L510,302.2L509.5,301.2L509,303.2L508.5,308.2L508,310.9L507.5,307.7L507,310.9L506.5,312.2L506,311.7L505.5,309.1L505,310.7L504.5,312.2L504,312.2L503.5,303.7L503,302L502.5,304.2L502,296.1L501.5,287.1L501,292.5L500.5,301.4L500,309L499.5,298.4L499,284.6L498.5,298.4L498,312.2L497.5,312.2L497,312.2L496.5,292.9L496,273.5L495.5,292.9L495,306.3L494.5,296.5L494,286.6L493.5,276.7L493,278.7L492.5,288.6L492,298.4L491.5,308.3L491,309.7L490.5,311.4L490,312.2L489.5,307.1L489,294.3L488.5,291.8L488,304.5L487.5,312.2L487,312.2L486.5,301.5L486,301.2L485.5,310.5L485,307.5L484.5,310.5L484,311.4L483.5,310.5L483,311.9L482.5,312.2L482,297L481.5,281.7L481,266.5L480.5,281.7L480,297L479.5,309.4L479,308.1L478.5,301.5L478,293.9L477.5,286.3L477,278.7L476.5,271L476,269.5L475.5,277.1L475,284.8L474.5,292.4L474,300L473.5,307.6L473,312.2L472.5,312.2L472,312.2L471.5,305.2L471,304.4L470.5,300L470,292.3L469.5,284.7L469,277L468.5,269.4L468,261.7L467.5,254.1L467,261.7L466.5,269.4L466,277L465.5,284.7L465,288.6L464.5,289.9L464,289.3L463.5,285.2L463,278.1L462.5,271L462,263.9L461.5,256.8L461,261L460.5,268.2L460,275.3L459.5,282.4L459,289.5L458.5,296.6L458,303.7L457.5,310.8L457,311L456.5,311.6L456,311.4L455.5,307.2L455,309.6L454.5,312.2L454,312.2L453.5,311.1L453,308.8L452.5,311.3L452,312.2L451.5,312.2L451,312.2L450.5,309.2L450,307.2L449.5,309.9L449,306.9L448.5,294.7L448,307.4L447.5,312.2L447,312.2L446.5,307.7L446,294.8L445.5,302.6L445,309L444.5,311.7L444,299.6L443.5,303.1L443,312.2L442.5,312.2L442,307.1L441.5,297.3L441,308.4L440.5,312.2L440,312.2L439.5,305.3L439,295.1L438.5,299.7L438,308.1L437.5,312.2L437,306.2L436.5,297.7L436,305.2L435.5,302.5L435,300.5L434.5,301.8L434,312.2L433.5,306.2L433,294.1L432.5,307.5L432,312.1L431.5,308.1L431,309.1L430.5,312.2L430,297.3L429.5,282.5L429,297.3L428.5,308.1L428,311.1L427.5,312.2L427,311.9L426.5,302.4L426,305L425.5,312.2L425,309.1L424.5,300.9L424,299.2L423.5,306L423,303.8L422.5,298.7L422,307.1L421.5,304.9L421,302.2L420.5,311.8L420,312.2L419.5,311.4L419,311.4L418.5,312.2L418,312.2L417.5,312.2L417,309.3L416.5,309.3L416,304.6L415.5,300.1L415,307.7L414.5,310.9L414,312.2L413.5,312.2L413,308.6L412.5,299.6L412,305L411.5,312.2L411,312.2L410.5,312.2L410,311.7L409.5,309.7L409,311.1L408.5,312.2L408,312.2L407.5,311.5L407,307.7L406.5,305.4L406,309.2L405.5,312.2L405,307.2L404.5,302.8L404,310.8L403.5,312.2L403,309.5L402.5,307.3L402,309.6L401.5,310.3L401,310.3L400.5,304.9L400,309.8L399.5,312.2L399,312.2L398.5,312.2L398,311.3L397.5,307.8L397,310.3L396.5,312.2L396,312.2L395.5,308.1L395,303L394.5,305.9L394,311.2L393.5,312.2L393,312.2L392.5,311.4L392,309.4L391.5,301.4L391,292.4L390.5,283.4L390,274.4L389.5,265.4L389,267.2L388.5,276.2L388,285.2L387.5,294.2L387,303.2L386.5,312.2L386,312.2L385.5,312.2L385,312.2L384.5,312.2L384,312.2L383.5,312.2L383,303.7L382.5,293.1L382,282.5L381.5,271.9L381,261.3L380.5,254.9L380,265.5L379.5,276.1L379,286.8L378.5,297.4L378,308L377.5,228L377,228L376.5,228L376,228L375.5,228L375,228L374.5,228L374,228L373.5,228L373,228L372.5,228L372,228L371.5,228L371,228L370.5,228L370,228L369.5,228L369,228L368.5,228L368,228L367.5,228L367,228L366.5,228L366,228L365.5,228L365,228L364.5,228L364,228L363.5,228L363,228L362.5,228L362,228L361.5,228L361,228L360.5,228L360,228L359.5,228L359,228L358.5,228L358,228L357.5,228L357,228L356.5,228L356,228L355.5,228L355,228L354.5,228L354,228L353.5,228L353,228L352.5,228L352,228L351.5,228L351,228L350.5,228L350,228L349.5,228L349,228L348.5,228L348,228L347.5,228L347,228L346.5,228L346,228L345.5,228L345,228L344.5,228L344,228L343.5,228L343,228L342.5,228L342,228L341.5,228L341,228L340.5,228L340,228L339.5,228L339,228L338.5,228L338,228L337.5,228L337,228L336.5,228L336,228L335.5,228L335,228L334.5,228L334,228L333.5,228L333,228L332.5,228L332,228L331.5,228L331,228L330.5,228L330,228L329.5,228L329,228L328.5,228L328,228L327.5,228L327,228L326.5,228L326,228L325.5,228L325,228L324.5,228L324,228L323.5,228L323,228L322.5,228L322,228L321.5,228L321,228L320.5,228L320,228L319.5,228L319,228L318.5,267.6L318,267.6L317.5,275.6L317,273.1L316.5,273.1L316,271.2L315.5,274.2L315,279.3L314.5,274.2L314,274.6L313.5,284.6L313,294.1L312.5,303.2L312,311.5L311.5,313.5L311,308.3L310.5,299.7L310,290.4L309.5,280.6L309,273.7L308.5,275.7L308,281L307.5,275.7L307,273.2L306.5,276.6L306,286.5L305.5,296L305,305L304.5,313L304,313.5L303.5,306.7L303,297.8L302.5,288.4L302,278.6L301.5,273.1L301,278.3L300.5,281.6L300,276.2L299.5,273.3L299,282.6L298.5,292.3L298,301.5L297.5,309.9L297,313.5L296.5,309.9L296,301.5L295.5,292.3L295,282.6L294.5,274.1L294,275.7L293.5,281L293,275.7L292.5,274L292,278.6L291.5,288.4L291,297.8L290.5,306.7L290,313.5L289.5,313L289,305L288.5,296L288,286.5L287.5,276.6L287,274.1L286.5,277.6L286,274.2L285.5,276.6L285,286.5L284.5,296L284,305L283.5,313L283,313.5L282.5,306.7L282,297.8L281.5,288.4L281,278.6L280.5,279.5L280,283.9L279.5,275.8L279,273.2L278.5,271.6L278,272.7L277.5,284.2L277,289.1L276.5,279.1L276,272.4L275.5,272.5L275,278.6L274.5,283.1L274,277.7L273.5,272.3L273,273L272.5,280.9L272,291.3L271.5,284.9L271,273.9L270.5,271.1L270,274.2L269.5,275.2L269,286.9L268.5,286.3L268,275.8L267.5,271.5L267,278.8L266.5,285.2L266,282L265.5,273.6L265,273.5L264.5,273.8L264,275L263.5,281.3L263,282.1L262.5,275L262,275.3L261.5,272L261,278.2L260.5,289.5L260,285.3L259.5,272.4L259,276.6L258.5,285.9L258,288.9L257.5,277.3L257,275.6L256.5,273L256,285.8L255.5,293.4L255,280.2L254.5,275.8L254,273.8L253.5,282L253,282.5L252.5,273.8L252,274.5L251.5,271L251,283.3L250.5,292.9L250,281L249.5,273.4L249,271.9L248.5,280.8L248,289.5L247.5,282.6L247,272.4L246.5,272.6L246,276.2L245.5,288.6L245,285.8L244.5,275.9L244,273.3L243.5,276.3L243,280.4L242.5,282.9L242,277.4L241.5,274.1L241,279.6L240.5,283.4L240,275.8L239.5,271.2L239,272.3L238.5,271.9L238,276.2L237.5,277.9L237,273.8L236.5,272.2L236,274.6L235.5,280.1L235,275.8L234.5,265.9L234,266.3L233.5,266.6L233,274.6L232.5,281.5L232,270.5L231.5,261.8L231,263.1L230.5,263.5L230,272.9L229.5,279.1L229,265.6L228.5,260L228,265.6L227.5,280.5L227,272.4L226.5,255.7L226,258.3L225.5,272.6L225,271L224.5,255.7L224,252.7L223.5,253L223,257.5L222.5,272.9L222,271.2L221.5,257L221,254.7L220.5,264.4L220,277.6L219.5,262.9L219,251.9L218.5,251.6L218,277.5L217.5,290.1L217,267.2L216.5,228Z" fill="#0aab85"/>
<path d="M216.5,401L217,381.3L217.5,367.4L218,356.5L218.5,358.1L219,367.2L219.5,372.1L220,377.9L220.5,381L221,375.4L221.5,383.4L222,375.4L222.5,368.9L223,379.6L223.5,374.5L224,367.9L224.5,362.7L225,357.8L225.5,357.1L226,361.2L226.5,367.1L227,366.3L227.5,365.1L228,361.7L228.5,364.9L229,368.7L229.5,369.1L230,368.6L230.5,364.5L231,356.8L231.5,349.3L232,353.3L232.5,360.3L233,367.5L233.5,367.4L234,367L234.5,364.1L235,359.3L235.5,360.3L236,365.2L236.5,370.7L237,369.3L237.5,368.2L238,366.3L238.5,366.4L239,360.6L239.5,354.3L240,347.1L240.5,355L241,362.6L241.5,370.1L242,365L242.5,352.9L243,340.3L243.5,347.6L244,358.9L244.5,367.7L245,366.8L245.5,362.4L246,358.6L246.5,354.8L247,358.8L247.5,363.6L248,368.7L248.5,369.3L249,362.3L249.5,352.4L250,346.6L250.5,356.6L251,364.1L251.5,368.1L252,366.5L252.5,365.5L253,357.9L253.5,349.7L254,347.7L254.5,357.5L255,366L255.5,369.6L256,370.7L256.5,364.5L257,357.1L257.5,352.9L258,360L258.5,366.1L259,366.1L259.5,365L260,364.1L260.5,360.3L261,356.5L261.5,360.5L262,365.3L262.5,368.1L263,363.9L263.5,358.5L264,361.3L264.5,365.8L265,364.7L265.5,359.4L266,354.8L266.5,358.8L267,362.5L267.5,365.6L268,359.1L268.5,350.5L269,345.4L269.5,355.5L270,366.5L270.5,368.3L271,362.1L271.5,356L272,359.3L272.5,363L273,365.9L273.5,364.7L274,365.3L274.5,365.9L275,363.5L275.5,358.3L276,352.3L276.5,358.6L277,367.2L277.5,370.6L278,370.4L278.5,368.8L279,366.4L279.5,358L280,351.8L280.5,355.1L281,352.1L281.5,342.3L282,332.9L282.5,324.1L283,316.2L283.5,317.7L284,325.8L284.5,334.7L285,344.2L285.5,354.1L286,364.3L286.5,361.7L287,364.3L287.5,354.1L288,344.2L288.5,334.7L289,325.8L289.5,317.7L290,316.2L290.5,324.1L291,332.9L291.5,342.3L292,352.1L292.5,362.3L293,362.5L293.5,358.2L294,362.5L294.5,358.2L295,348.1L295.5,338.4L296,329.3L296.5,320.8L297,315.5L297.5,320.8L298,329.3L298.5,338.4L299,348.1L299.5,358.2L300,361.9L300.5,357.4L301,360.1L301.5,362.3L302,352.1L302.5,342.3L303,332.9L303.5,324.1L304,316.2L304.5,317.7L305,325.8L305.5,334.7L306,344.2L306.5,354.1L307,364.3L307.5,362.5L308,358.2L308.5,362.5L309,360.2L309.5,350.1L310,340.3L310.5,331.1L311,322.4L311.5,315.5L312,319.2L312.5,327.5L313,336.6L313.5,346.2L314,356.1L314.5,364.1L315,360L315.5,364.1L316,364.6L316.5,365L317,366.1L317.5,368.6L318,371.9L318.5,373L319,401L319.5,401L320,401L320.5,401L321,401L321.5,401L322,401L322.5,401L323,401L323.5,401L324,401L324.5,401L325,401L325.5,401L326,401L326.5,401L327,401L327.5,401L328,401L328.5,401L329,401L329.5,401L330,401L330.5,401L331,401L331.5,401L332,401L332.5,401L333,401L333.5,401L334,401L334.5,401L335,401L335.5,401L336,401L336.5,401L337,401L337.5,401L338,401L338.5,401L339,401L339.5,401L340,401L340.5,401L341,401L341.5,401L342,401L342.5,401L343,401L343.5,401L344,401L344.5,401L345,401L345.5,401L346,401L346.5,401L347,401L347.5,401L348,401L348.5,401L349,401L349.5,401L350,401L350.5,401L351,401L351.5,401L352,401L352.5,401L353,401L353.5,401L354,401L354.5,401L355,401L355.5,401L356,401L356.5,401L357,401L357.5,401L358,401L358.5,401L359,401L359.5,401L360,401L360.5,401L361,401L361.5,401L362,401L362.5,401L363,401L363.5,401L364,401L364.5,401L365,401L365.5,401L366,401L366.5,401L367,401L367.5,401L368,401L368.5,401L369,401L369.5,401L370,401L370.5,401L371,401L371.5,401L372,401L372.5,401L373,401L373.5,401L374,401L374.5,401L375,401L375.5,401L376,401L376.5,401L377,401L377.5,401L378,322.2L378.5,333.5L379,344.7L379.5,356L380,367.2L380.5,369.5L381,358.2L381.5,347L382,335.7L382.5,324.5L383,317.6L383.5,317.6L384,317.6L384.5,317.6L385,317.6L385.5,317.6L386,323.4L386.5,333.2L387,343L387.5,352.8L388,362.6L388.5,364.6L389,354.8L389.5,345L390,335.1L390.5,325.3L391,317.6L391.5,317.6L392,323.4L392.5,320.1L393,324.8L393.5,320.1L394,322.1L394.5,333.2L395,339.8L395.5,328.8L396,318.9L396.5,317.6L397,321L397.5,338L398,322.1L398.5,319.2L399,338.4L399.5,337.3L400,318L400.5,322.9L401,338.8L401.5,332.4L402,333L402.5,325.2L403,326.5L403.5,321.1L404,317.6L404.5,317.6L405,324.2L405.5,327.2L406,330.9L406.5,325.9L407,339.6L407.5,335L408,317.6L408.5,317.6L409,320.3L409.5,325.6L410,320.3L410.5,317.6L411,317.6L411.5,317.6L412,325.1L412.5,333.2L413,323.8L413.5,317.6L414,318.3L414.5,332.3L415,346.2L415.5,343.5L416,329.5L416.5,321.6L417,336.1L417.5,327.1L418,317.6L418.5,317.6L419,325.5L419.5,337.6L420,325.6L420.5,327.1L421,336.8L421.5,334.9L422,325.2L422.5,317.6L423,317.6L423.5,317.6L424,319.3L424.5,322.6L425,324.5L425.5,326.5L426,317.6L426.5,322.5L427,321.6L427.5,317.6L428,317.6L428.5,337.5L429,343.7L429.5,346.3L430,334.4L430.5,325.1L431,320.7L431.5,318.7L432,317.6L432.5,326.7L433,339.9L433.5,327.1L434,317.6L434.5,321.1L435,332.6L435.5,334.3L436,322.8L436.5,317.6L437,326.5L437.5,324.7L438,329.1L438.5,336.5L439,326.9L439.5,327.9L440,338.5L440.5,324.9L441,320L441.5,326.7L442,328.7L442.5,334.4L443,329.7L443.5,317.6L444,317.6L444.5,317.6L445,336.6L445.5,336.5L446,322.3L446.5,319.7L447,335.3L447.5,329.8L448,328.3L448.5,320.3L449,320.2L449.5,321.5L450,317.6L450.5,317.6L451,322.5L451.5,332.8L452,327L452.5,318.1L453,327.4L453.5,319.7L454,319.5L454.5,340.5L455,335.3L455.5,317.6L456,317.6L456.5,321.9L457,326.4L457.5,321.8L458,326.4L458.5,334.2L459,341.9L459.5,349.7L460,357.5L460.5,365.2L461,360.6L461.5,352.8L462,345L462.5,343.2L463,339.7L463.5,321.7L464,317.6L464.5,317.6L465,317.6L465.5,324.3L466,330.2L466.5,338.3L467,346.5L467.5,354.6L468,362.8L468.5,370.9L469,366L469.5,357.9L470,349.7L470.5,343L471,346.1L471.5,332.1L472,317.6L472.5,317.6L473,317.6L473.5,317.6L474,335.6L474.5,338.3L475,347.2L475.5,357.1L476,359.1L476.5,349.2L477,339.3L477.5,329.4L478,319.5L478.5,319.7L479,329L479.5,328.6L480,323.3L480.5,336.2L481,349.1L481.5,362L482,349.1L482.5,336.2L483,323.3L483.5,320.2L484,318.6L484.5,317.6L485,317.6L485.5,325.2L486,326.7L486.5,326.9L487,321.6L487.5,317.6L488,317.6L488.5,323.9L489,334.5L489.5,333L490,320.3L490.5,318.6L491,317.6L491.5,328.2L492,329.6L492.5,334.6L493,350.4L493.5,353.6L494,337.7L494.5,321.9L495,320.9L495.5,318L496,323.5L496.5,343.6L497,332.6L497.5,324.5L498,335.5L498.5,325.4L499,321.6L499.5,317.6L500,331.6L500.5,342.4L501,348.7L501.5,346.5L502,337.1L502.5,341.3L503,323.9L503.5,317.6L504,325.7L504.5,331.8L505,328.4L505.5,327.7L506,322.8L506.5,317.6L507,320.4L507.5,336.3L508,321.5L508.5,317.6L509,330.6L509.5,335.8L510,324.2L510.5,320.2L511,332.3L511.5,325.4L512,317.6L512.5,326.9L513,331.9L513.5,318.8L514,320.7L514.5,317.6L515,317.6L515.5,319.2L516,321.7L516.5,319.9L517,317.6L517.5,320.8L518,321.9L518.5,319.8L519,321.9L519.5,318.8L520,317.6L520.5,317.6L521,320.7L521.5,324.1L522,324.4L522.5,324.9L523,318.8L523.5,317.6L524,317.6L524.5,325.8L525,324.9L525.5,317.6L526,317.6L526.5,320.5L527,329.8L527.5,330.1L528,320.9L528.5,317.6L529,319.8L529.5,323.7L530,332.3L530.5,319.1L531,317.6L531.5,320.8L532,330.9L532.5,328.3L533,318.2L533.5,317.6L534,323L534.5,318L535,320.4L535.5,323.8L536,319.9L536.5,325.2L537,330.1L537.5,329.5L538,328.9L538.5,324.8L539,317.9L539.5,317.6L540,317.6L540.5,339.5L541,330.4L541.5,317.6L542,317.6L542.5,321.9L543,323.2L543.5,318.8L544,320.7L544.5,326.9L545,322.4L545.5,317.6L546,321.1L546.5,326.8L547,321.1L547.5,323L548,319.2L548.5,317.6L549,318.3L549.5,339.1L550,322.4L550.5,319.8L551,325.7L551.5,318L552,321.9L552.5,323.1L553,319.3L553.5,320.1L554,323.2L554.5,319.1L555,335.3L555.5,339.7L556,319.7L556.5,317.6L557,319.3L557.5,335.7L558,336.7L558.5,329.6L559,317.6L559.5,317.6L560,317.6L560.5,329.7L561,331.1L561.5,324.3L562,319.5L562.5,317.6L563,323L563.5,334.5L564,335.1L564.5,323L565,320.6L565.5,322.9L566,318.5L566.5,317.6L567,317.6L567.5,317.6L568,328.1L568.5,327.3L569,319.8L569.5,317.6L570,317.6L570.5,317.6L571,319L571.5,320.3L572,317.9L572.5,317.6L573,317.6L573.5,317.6L574,341.1L574.5,354.1L575,354.2L575.5,354.4L576,354.6L576.5,354.7L577,353.6L577.5,350.4L578,347.3L578.5,347.6L579,352.9L579.5,358.2L580,355.4L580.5,352.5L581,349.6L581.5,346.7L582,347.2L582.5,352.8L583,358.4L583.5,364L584,368.1L584.5,366.3L585,364.4L585.5,362.5L586,356.5L586.5,350.4L587,344.4L587.5,343.6L588,350.8L588.5,357.9L589,365.1L589.5,366.8L590,368.5L590.5,370.2L591,371.9L591.5,366.7L592,357L592.5,347.2L593,340.7L593.5,347L594,353.3L594.5,359.6L595,361.3L595.5,361.9L596,362.6L596.5,362.4L597,361L597.5,359.6L598,358.2L598.5,356.4L599,354.5L599.5,356.4L600,359.9L600,448.8L599.5,448.6L599,448.7L598.5,448.7L598,448.7L597.5,448.8L597,448.8L596.5,448.8L596,448.9L595.5,448L595,447.1L594.5,446.2L594,449L593.5,454.2L593,459.4L592.5,454.9L592,448L591.5,441.1L591,437.3L590.5,438.4L590,439.5L589.5,441L589,442.5L588.5,444.5L588,448.1L587.5,451.7L587,455.3L586.5,458.9L586,462.6L585.5,460.9L585,459.1L584.5,457.4L584,455.7L583.5,458.6L583,461.5L582.5,464.5L582,467.4L581.5,467.1L581,464.7L580.5,462.2L580,459.8L579.5,457.4L579,455L578.5,447.2L578,435.8L577.5,429L577,440.8L576.5,452.5L576,455.1L575.5,455.3L575,455.5L574.5,458.8L574,474.2L573.5,456.3L573,480.4L572.5,485.2L572,484.5L571.5,480.6L571,482.8L570.5,485.2L570,479.7L569.5,465.5L569,476.1L568.5,483.5L568,485.2L567.5,485.2L567,479.8L566.5,479.4L566,485.2L565.5,483.2L565,479.2L564.5,480.7L564,474.6L563.5,475.9L563,482.6L562.5,483.4L562,482.7L561.5,476.5L561,477.8L560.5,484L560,483.8L559.5,484.2L559,485.2L558.5,481.8L558,478.7L557.5,484.2L557,485.2L556.5,483.8L556,475.2L555.5,473.4L555,484.7L554.5,485.2L554,481.2L553.5,475.1L553,483L552.5,485.2L552,485.2L551.5,477.5L551,467.5L550.5,471.5L550,485.2L549.5,485.2L549,485.2L548.5,484.7L548,471.7L547.5,475.4L547,485.2L546.5,476.1L546,470.9L545.5,478.6L545,483L544.5,480.7L544,483.1L543.5,485.2L543,485.2L542.5,481.7L542,469.7L541.5,479.2L541,485.2L540.5,485.2L540,485.2L539.5,476.2L539,469.3L538.5,483.2L538,485.2L537.5,479.4L537,472.2L536.5,476.5L536,483.8L535.5,485.2L535,485.2L534.5,481.2L534,476.7L533.5,483.6L533,485.2L532.5,479.8L532,474.1L531.5,483.3L531,485.2L530.5,480.2L530,469.6L529.5,480L529,481.4L528.5,483.7L528,480L527.5,481.2L527,485.2L526.5,484.7L526,477.5L525.5,480L525,485.2L524.5,481.2L524,472L523.5,481.6L523,485.2L522.5,480.1L522,471.3L521.5,467L521,481.6L520.5,485.2L520,483.5L519.5,483.2L519,485.2L518.5,480.5L518,472.6L517.5,473.6L517,472.9L516.5,482.2L516,485.2L515.5,485.2L515,484.2L514.5,480.9L514,482.6L513.5,481.4L513,483.4L512.5,483L512,484.8L511.5,485.2L511,485.2L510.5,485.2L510,475.2L509.5,474.2L509,476.2L508.5,481.2L508,483.9L507.5,480.7L507,483.9L506.5,485.2L506,484.7L505.5,482.1L505,483.7L504.5,485.2L504,485.2L503.5,476.7L503,475L502.5,477.2L502,469.1L501.5,460.1L501,465.5L500.5,474.4L500,482L499.5,471.4L499,457.6L498.5,471.4L498,485.2L497.5,485.2L497,485.2L496.5,465.9L496,446.5L495.5,465.9L495,479.3L494.5,469.5L494,459.6L493.5,449.7L493,451.7L492.5,461.6L492,471.4L491.5,481.3L491,482.7L490.5,484.4L490,485.2L489.5,480.1L489,467.3L488.5,464.8L488,477.5L487.5,485.2L487,485.2L486.5,474.5L486,474.2L485.5,483.5L485,480.5L484.5,483.5L484,484.4L483.5,483.5L483,484.9L482.5,485.2L482,470L481.5,454.7L481,439.5L480.5,454.7L480,470L479.5,482.4L479,481.1L478.5,474.5L478,466.9L477.5,459.3L477,451.7L476.5,444L476,442.5L475.5,450.1L475,457.8L474.5,465.4L474,473L473.5,480.6L473,485.2L472.5,485.2L472,485.2L471.5,478.2L471,477.4L470.5,473L470,465.3L469.5,457.7L469,450L468.5,442.4L468,434.7L467.5,427.1L467,434.7L466.5,442.4L466,450L465.5,457.7L465,461.6L464.5,462.9L464,462.3L463.5,458.2L463,451.1L462.5,444L462,436.9L461.5,429.8L461,434L460.5,441.2L460,448.3L459.5,455.4L459,462.5L458.5,469.6L458,476.7L457.5,483.8L457,484L456.5,484.6L456,484.4L455.5,480.2L455,482.6L454.5,485.2L454,485.2L453.5,484.1L453,481.8L452.5,484.3L452,485.2L451.5,485.2L451,485.2L450.5,482.2L450,480.2L449.5,482.9L449,479.9L448.5,467.7L448,480.4L447.5,485.2L447,485.2L446.5,480.7L446,467.8L445.5,475.6L445,482L444.5,484.7L444,472.6L443.5,476.1L443,485.2L442.5,485.2L442,480.1L441.5,470.3L441,481.4L440.5,485.2L440,485.2L439.5,478.3L439,468.1L438.5,472.7L438,481.1L437.5,485.2L437,479.2L436.5,470.7L436,478.2L435.5,475.5L435,473.5L434.5,474.8L434,485.2L433.5,479.2L433,467.1L432.5,480.5L432,485.1L431.5,481.1L431,482.1L430.5,485.2L430,470.3L429.5,455.5L429,470.3L428.5,481.1L428,484.1L427.5,485.2L427,484.9L426.5,475.4L426,478L425.5,485.2L425,482.1L424.5,473.9L424,472.2L423.5,479L423,476.8L422.5,471.7L422,480.1L421.5,477.9L421,475.2L420.5,484.8L420,485.2L419.5,484.4L419,484.4L418.5,485.2L418,485.2L417.5,485.2L417,482.3L416.5,482.3L416,477.6L415.5,473.1L415,480.7L414.5,483.9L414,485.2L413.5,485.2L413,481.6L412.5,472.6L412,478L411.5,485.2L411,485.2L410.5,485.2L410,484.7L409.5,482.7L409,484.1L408.5,485.2L408,485.2L407.5,484.5L407,480.7L406.5,478.4L406,482.2L405.5,485.2L405,480.2L404.5,475.8L404,483.8L403.5,485.2L403,482.5L402.5,480.3L402,482.6L401.5,483.3L401,483.3L400.5,477.9L400,482.8L399.5,485.2L399,485.2L398.5,485.2L398,484.3L397.5,480.8L397,483.3L396.5,485.2L396,485.2L395.5,481.1L395,476L394.5,478.9L394,484.2L393.5,485.2L393,485.2L392.5,484.4L392,482.4L391.5,474.4L391,465.4L390.5,456.4L390,447.4L389.5,438.4L389,440.2L388.5,449.2L388,458.2L387.5,467.2L387,476.2L386.5,485.2L386,485.2L385.5,485.2L385,485.2L384.5,485.2L384,485.2L383.5,485.2L383,476.7L382.5,466.1L382,455.5L381.5,444.9L381,434.3L380.5,427.9L380,438.5L379.5,449.1L379,459.8L378.5,470.4L378,481L377.5,401L377,401L376.5,401L376,401L375.5,401L375,401L374.5,401L374,401L373.5,401L373,401L372.5,401L372,401L371.5,401L371,401L370.5,401L370,401L369.5,401L369,401L368.5,401L368,401L367.5,401L367,401L366.5,401L366,401L365.5,401L365,401L364.5,401L364,401L363.5,401L363,401L362.5,401L362,401L361.5,401L361,401L360.5,401L360,401L359.5,401L359,401L358.5,401L358,401L357.5,401L357,401L356.5,401L356,401L355.5,401L355,401L354.5,401L354,401L353.5,401L353,401L352.5,401L352,401L351.5,401L351,401L350.5,401L350,401L349.5,401L349,401L348.5,401L348,401L347.5,401L347,401L346.5,401L346,401L345.5,401L345,401L344.5,401L344,401L343.5,401L343,401L342.5,401L342,401L341.5,401L341,401L340.5,401L340,401L339.5,401L339,401L338.5,401L338,401L337.5,401L337,401L336.5,401L336,401L335.5,401L335,401L334.5,401L334,401L333.5,401L333,401L332.5,401L332,401L331.5,401L331,401L330.5,401L330,401L329.5,401L329,401L328.5,401L328,401L327.5,401L327,401L326.5,401L326,401L325.5,401L325,401L324.5,401L324,401L323.5,401L323,401L322.5,401L322,401L321.5,401L321,401L320.5,401L320,401L319.5,401L319,401L318.5,440.6L318,440.6L317.5,448.6L317,446.1L316.5,446.1L316,444.2L315.5,447.2L315,452.3L314.5,447.2L314,447.6L313.5,457.6L313,467.1L312.5,476.2L312,484.5L311.5,486.5L311,481.3L310.5,472.7L310,463.4L309.5,453.6L309,446.7L308.5,448.7L308,454L307.5,448.7L307,446.2L306.5,449.6L306,459.5L305.5,469L305,478L304.5,486L304,486.5L303.5,479.7L303,470.8L302.5,461.4L302,451.6L301.5,446.1L301,451.3L300.5,454.6L300,449.2L299.5,446.3L299,455.6L298.5,465.3L298,474.5L297.5,482.9L297,486.5L296.5,482.9L296,474.5L295.5,465.3L295,455.6L294.5,447.1L294,448.7L293.5,454L293,448.7L292.5,447L292,451.6L291.5,461.4L291,470.8L290.5,479.7L290,486.5L289.5,486L289,478L288.5,469L288,459.5L287.5,449.6L287,447.1L286.5,450.6L286,447.2L285.5,449.6L285,459.5L284.5,469L284,478L283.5,486L283,486.5L282.5,479.7L282,470.8L281.5,461.4L281,451.6L280.5,452.5L280,456.9L279.5,448.8L279,446.2L278.5,444.6L278,445.7L277.5,457.2L277,462.1L276.5,452.1L276,445.4L275.5,445.5L275,451.6L274.5,456.1L274,450.7L273.5,445.3L273,446L272.5,453.9L272,464.3L271.5,457.9L271,446.9L270.5,444.1L270,447.2L269.5,448.2L269,459.9L268.5,459.3L268,448.8L267.5,444.5L267,451.8L266.5,458.2L266,455L265.5,446.6L265,446.5L264.5,446.8L264,448L263.5,454.3L263,455.1L262.5,448L262,448.3L261.5,445L261,451.2L260.5,462.5L260,458.3L259.5,445.4L259,449.6L258.5,458.9L258,461.9L257.5,450.3L257,448.6L256.5,446L256,458.8L255.5,466.4L255,453.2L254.5,448.8L254,446.8L253.5,455L253,455.5L252.5,446.8L252,447.5L251.5,444L251,456.3L250.5,465.9L250,454L249.5,446.4L249,444.9L248.5,453.8L248,462.5L247.5,455.6L247,445.4L246.5,445.6L246,449.2L245.5,461.6L245,458.8L244.5,448.9L244,446.3L243.5,449.3L243,453.4L242.5,455.9L242,450.4L241.5,447.1L241,452.6L240.5,456.4L240,448.8L239.5,444.2L239,445.3L238.5,444.9L238,449.2L237.5,450.9L237,446.8L236.5,445.2L236,447.6L235.5,453.1L235,448.8L234.5,438.9L234,439.3L233.5,439.6L233,447.6L232.5,454.5L232,443.5L231.5,434.8L231,436.1L230.5,436.5L230,445.9L229.5,452.1L229,438.6L228.5,433L228,438.6L227.5,453.5L227,445.4L226.5,428.7L226,431.3L225.5,445.6L225,444L224.5,428.7L224,425.7L223.5,426L223,430.5L222.5,445.9L222,444.2L221.5,430L221,427.7L220.5,437.4L220,450.6L219.5,435.9L219,424.9L218.5,424.6L218,450.5L217.5,463.1L217,440.2L216.5,401Z" fill="#0aab85"/>
<!-- faint grid over wave -->
<g opacity="0.05" stroke="#d0fff0">
<line x1="393.5" y1="142" x2="393.5" y2="486"/><line x1="423.5" y1="142" x2="423.5" y2="486"/><line x1="453.5" y1="142" x2="453.5" y2="486"/><line x1="484.5" y1="142" x2="484.5" y2="486"/><line x1="514.5" y1="142" x2="514.5" y2="486"/><line x1="544.5" y1="142" x2="544.5" y2="486"/><line x1="574.5" y1="142" x2="574.5" y2="486"/>
<line x1="378" y1="228.5" x2="600" y2="228.5"/><line x1="378" y1="401.5" x2="600" y2="401.5"/>
</g>
<rect x="212" y="142" width="1" height="345" fill="#020c0c"/>
<rect x="319.5" y="227" width="57.5" height="1" fill="#086652"/><rect x="319.5" y="400.4" width="57.5" height="1" fill="#086652"/>
<!-- cursor & marker -->
<rect x="318.6" y="142" width="1.3" height="340" fill="#f4f6f6"/>
<rect x="376.5" y="142" width="1.4" height="344" fill="#a81818"/>
<path d="M319.2,480.8 C320.8,483.2 323,485.4 323,488 A3.8,3.8 0 0 1 315.4,488 C315.4,485.4 317.6,483.2 319.2,480.8Z" fill="#fff"/>
<circle cx="319.2" cy="488.2" r="1" fill="#222"/>
<line x1="212" y1="486.5" x2="604" y2="486.5" stroke="#858c8c" stroke-width="1"/>
<line x1="212.5" y1="486" x2="212.5" y2="492" stroke="#9aa0a0" stroke-width="1"/>
<text x="216.20 220.84 226.59 230.12 234.76 240.51 244.04 248.68 253.32" y="496.8" font-family="Liberation Sans, sans-serif" font-size="8.0" fill="#959c9c">00:00.000</text>
<line x1="218.5" y1="486" x2="218.5" y2="489" stroke="#7a8080" stroke-width="1"/>
<line x1="224.5" y1="486" x2="224.5" y2="489" stroke="#7a8080" stroke-width="1"/>
<line x1="230.5" y1="486" x2="230.5" y2="489" stroke="#7a8080" stroke-width="1"/>
<line x1="236.5" y1="486" x2="236.5" y2="489" stroke="#7a8080" stroke-width="1"/>
<line x1="242.5" y1="486" x2="242.5" y2="489" stroke="#7a8080" stroke-width="1"/>
<line x1="248.5" y1="486" x2="248.5" y2="489" stroke="#7a8080" stroke-width="1"/>
<line x1="254.5" y1="486" x2="254.5" y2="489" stroke="#7a8080" stroke-width="1"/>
<line x1="260.5" y1="486" x2="260.5" y2="489" stroke="#7a8080" stroke-width="1"/>
<line x1="266.5" y1="486" x2="266.5" y2="489" stroke="#7a8080" stroke-width="1"/>
<line x1="272.5" y1="486" x2="272.5" y2="492" stroke="#9aa0a0" stroke-width="1"/>
<text x="276.20 280.84 286.59 290.12 294.76 300.51 304.04 308.68 313.32" y="496.8" font-family="Liberation Sans, sans-serif" font-size="8.0" fill="#959c9c">00:20.000</text>
<line x1="278.5" y1="486" x2="278.5" y2="489" stroke="#7a8080" stroke-width="1"/>
<line x1="284.5" y1="486" x2="284.5" y2="489" stroke="#7a8080" stroke-width="1"/>
<line x1="291.5" y1="486" x2="291.5" y2="489" stroke="#7a8080" stroke-width="1"/>
<line x1="297.5" y1="486" x2="297.5" y2="489" stroke="#7a8080" stroke-width="1"/>
<line x1="303.5" y1="486" x2="303.5" y2="489" stroke="#7a8080" stroke-width="1"/>
<line x1="309.5" y1="486" x2="309.5" y2="489" stroke="#7a8080" stroke-width="1"/>
<line x1="315.5" y1="486" x2="315.5" y2="489" stroke="#7a8080" stroke-width="1"/>
<line x1="321.5" y1="486" x2="321.5" y2="489" stroke="#7a8080" stroke-width="1"/>
<line x1="327.5" y1="486" x2="327.5" y2="489" stroke="#7a8080" stroke-width="1"/>
<line x1="333.5" y1="486" x2="333.5" y2="492" stroke="#9aa0a0" stroke-width="1"/>
<text x="337.20 341.84 347.59 351.12 355.76 361.51 365.04 369.68 374.32" y="496.8" font-family="Liberation Sans, sans-serif" font-size="8.0" fill="#959c9c">00:40.000</text>
<line x1="339.5" y1="486" x2="339.5" y2="489" stroke="#7a8080" stroke-width="1"/>
<line x1="345.5" y1="486" x2="345.5" y2="489" stroke="#7a8080" stroke-width="1"/>
<line x1="351.5" y1="486" x2="351.5" y2="489" stroke="#7a8080" stroke-width="1"/>
<line x1="357.5" y1="486" x2="357.5" y2="489" stroke="#7a8080" stroke-width="1"/>
<line x1="363.5" y1="486" x2="363.5" y2="489" stroke="#7a8080" stroke-width="1"/>
<line x1="369.5" y1="486" x2="369.5" y2="489" stroke="#7a8080" stroke-width="1"/>
<line x1="375.5" y1="486" x2="375.5" y2="489" stroke="#7a8080" stroke-width="1"/>
<line x1="381.5" y1="486" x2="381.5" y2="489" stroke="#7a8080" stroke-width="1"/>
<line x1="387.5" y1="486" x2="387.5" y2="489" stroke="#7a8080" stroke-width="1"/>
<line x1="393.5" y1="486" x2="393.5" y2="492" stroke="#9aa0a0" stroke-width="1"/>
<text x="397.20 401.84 407.59 411.12 415.76 421.51 425.04 429.68 434.32" y="496.8" font-family="Liberation Sans, sans-serif" font-size="8.0" fill="#959c9c">01:00.000</text>
<line x1="399.5" y1="486" x2="399.5" y2="489" stroke="#7a8080" stroke-width="1"/>
<line x1="405.5" y1="486" x2="405.5" y2="489" stroke="#7a8080" stroke-width="1"/>
<line x1="411.5" y1="486" x2="411.5" y2="489" stroke="#7a8080" stroke-width="1"/>
<line x1="417.5" y1="486" x2="417.5" y2="489" stroke="#7a8080" stroke-width="1"/>
<line x1="423.5" y1="486" x2="423.5" y2="489" stroke="#7a8080" stroke-width="1"/>
<line x1="429.5" y1="486" x2="429.5" y2="489" stroke="#7a8080" stroke-width="1"/>
<line x1="435.5" y1="486" x2="435.5" y2="489" stroke="#7a8080" stroke-width="1"/>
<line x1="441.5" y1="486" x2="441.5" y2="489" stroke="#7a8080" stroke-width="1"/>
<line x1="447.5" y1="486" x2="447.5" y2="489" stroke="#7a8080" stroke-width="1"/>
<line x1="453.5" y1="486" x2="453.5" y2="492" stroke="#9aa0a0" stroke-width="1"/>
<text x="457.20 461.84 467.59 471.12 475.76 481.51 485.04 489.68 494.32" y="496.8" font-family="Liberation Sans, sans-serif" font-size="8.0" fill="#959c9c">01:20.000</text>
<line x1="459.5" y1="486" x2="459.5" y2="489" stroke="#7a8080" stroke-width="1"/>
<line x1="465.5" y1="486" x2="465.5" y2="489" stroke="#7a8080" stroke-width="1"/>
<line x1="472.5" y1="486" x2="472.5" y2="489" stroke="#7a8080" stroke-width="1"/>
<line x1="478.5" y1="486" x2="478.5" y2="489" stroke="#7a8080" stroke-width="1"/>
<line x1="484.5" y1="486" x2="484.5" y2="489" stroke="#7a8080" stroke-width="1"/>
<line x1="490.5" y1="486" x2="490.5" y2="489" stroke="#7a8080" stroke-width="1"/>
<line x1="496.5" y1="486" x2="496.5" y2="489" stroke="#7a8080" stroke-width="1"/>
<line x1="502.5" y1="486" x2="502.5" y2="489" stroke="#7a8080" stroke-width="1"/>
<line x1="508.5" y1="486" x2="508.5" y2="489" stroke="#7a8080" stroke-width="1"/>
<line x1="514.5" y1="486" x2="514.5" y2="492" stroke="#9aa0a0" stroke-width="1"/>
<text x="518.20 522.84 528.59 532.12 536.76 542.51 546.04 550.68 555.32" y="496.8" font-family="Liberation Sans, sans-serif" font-size="8.0" fill="#959c9c">01:40.000</text>
<line x1="520.5" y1="486" x2="520.5" y2="489" stroke="#7a8080" stroke-width="1"/>
<line x1="526.5" y1="486" x2="526.5" y2="489" stroke="#7a8080" stroke-width="1"/>
<line x1="532.5" y1="486" x2="532.5" y2="489" stroke="#7a8080" stroke-width="1"/>
<line x1="538.5" y1="486" x2="538.5" y2="489" stroke="#7a8080" stroke-width="1"/>
<line x1="544.5" y1="486" x2="544.5" y2="489" stroke="#7a8080" stroke-width="1"/>
<line x1="550.5" y1="486" x2="550.5" y2="489" stroke="#7a8080" stroke-width="1"/>
<line x1="556.5" y1="486" x2="556.5" y2="489" stroke="#7a8080" stroke-width="1"/>
<line x1="562.5" y1="486" x2="562.5" y2="489" stroke="#7a8080" stroke-width="1"/>
<line x1="568.5" y1="486" x2="568.5" y2="489" stroke="#7a8080" stroke-width="1"/>
<line x1="574.5" y1="486" x2="574.5" y2="492" stroke="#9aa0a0" stroke-width="1"/>
<text x="578.20 582.84 588.59 592.12 596.76 602.51 606.04 610.68 615.32" y="496.8" font-family="Liberation Sans, sans-serif" font-size="8.0" fill="#959c9c">02:00.000</text>
<line x1="580.5" y1="486" x2="580.5" y2="489" stroke="#7a8080" stroke-width="1"/>
<line x1="586.5" y1="486" x2="586.5" y2="489" stroke="#7a8080" stroke-width="1"/>
<line x1="592.5" y1="486" x2="592.5" y2="489" stroke="#7a8080" stroke-width="1"/>
<line x1="598.5" y1="486" x2="598.5" y2="489" stroke="#7a8080" stroke-width="1"/>
<line x1="600.5" y1="142" x2="600.5" y2="486" stroke="#727a7a" stroke-width="1"/>
<line x1="600" y1="142.5" x2="605" y2="142.5" stroke="#8a9090" stroke-width="1"/>
<line x1="600" y1="149.5" x2="604" y2="149.5" stroke="#8a9090" stroke-width="1"/>
<line x1="600" y1="175.5" x2="604" y2="175.5" stroke="#8a9090" stroke-width="1"/>
<line x1="600" y1="201.5" x2="604" y2="201.5" stroke="#8a9090" stroke-width="1"/>
<line x1="600" y1="228" x2="604" y2="228" stroke="#8a9090" stroke-width="1"/>
<text x="605" y="231" font-family="Liberation Sans, sans-serif" font-size="8.7" fill="#a8aeae">+0</text>
<line x1="600" y1="254" x2="604" y2="254" stroke="#8a9090" stroke-width="1"/>
<text x="605" y="257" font-family="Liberation Sans, sans-serif" font-size="8.7" fill="#a8aeae">-10000</text>
<line x1="600" y1="280" x2="604" y2="280" stroke="#8a9090" stroke-width="1"/>
<text x="605" y="283" font-family="Liberation Sans, sans-serif" font-size="8.7" fill="#a8aeae">-20000</text>
<line x1="600" y1="306.5" x2="604" y2="306.5" stroke="#8a9090" stroke-width="1"/>
<text x="605" y="309.5" font-family="Liberation Sans, sans-serif" font-size="8.7" fill="#a8aeae">-30000</text>
<line x1="600" y1="322.5" x2="604" y2="322.5" stroke="#8a9090" stroke-width="1"/>
<text x="605" y="325.5" font-family="Liberation Sans, sans-serif" font-size="8.7" fill="#a8aeae">+30000</text>
<line x1="600" y1="348.5" x2="604" y2="348.5" stroke="#8a9090" stroke-width="1"/>
<text x="605" y="351.5" font-family="Liberation Sans, sans-serif" font-size="8.7" fill="#a8aeae">+20000</text>
<line x1="600" y1="375" x2="604" y2="375" stroke="#8a9090" stroke-width="1"/>
<text x="605" y="378" font-family="Liberation Sans, sans-serif" font-size="8.7" fill="#a8aeae">+10000</text>
<line x1="600" y1="401" x2="604" y2="401" stroke="#8a9090" stroke-width="1"/>
<text x="605" y="404" font-family="Liberation Sans, sans-serif" font-size="8.7" fill="#a8aeae">+0</text>
<line x1="600" y1="427" x2="604" y2="427" stroke="#8a9090" stroke-width="1"/>
<text x="605" y="430" font-family="Liberation Sans, sans-serif" font-size="8.7" fill="#a8aeae">-10000</text>
<line x1="600" y1="453.5" x2="604" y2="453.5" stroke="#8a9090" stroke-width="1"/>
<text x="605" y="456.5" font-family="Liberation Sans, sans-serif" font-size="8.7" fill="#a8aeae">-20000</text>
<line x1="600" y1="479.5" x2="604" y2="479.5" stroke="#8a9090" stroke-width="1"/>
<text x="605" y="482.5" font-family="Liberation Sans, sans-serif" font-size="8.7" fill="#a8aeae">-30000</text>
<line x1="600" y1="144.5" x2="602.5" y2="144.5" stroke="#6a7272" stroke-width="1"/>
<line x1="600" y1="150.5" x2="602.5" y2="150.5" stroke="#6a7272" stroke-width="1"/>
<line x1="600" y1="155.5" x2="602.5" y2="155.5" stroke="#6a7272" stroke-width="1"/>
<line x1="600" y1="160.5" x2="602.5" y2="160.5" stroke="#6a7272" stroke-width="1"/>
<line x1="600" y1="165.5" x2="602.5" y2="165.5" stroke="#6a7272" stroke-width="1"/>
<line x1="600" y1="170.5" x2="602.5" y2="170.5" stroke="#6a7272" stroke-width="1"/>
<line x1="600" y1="176.5" x2="602.5" y2="176.5" stroke="#6a7272" stroke-width="1"/>
<line x1="600" y1="181.5" x2="602.5" y2="181.5" stroke="#6a7272" stroke-width="1"/>
<line x1="600" y1="186.5" x2="602.5" y2="186.5" stroke="#6a7272" stroke-width="1"/>
<line x1="600" y1="191.5" x2="602.5" y2="191.5" stroke="#6a7272" stroke-width="1"/>
<line x1="600" y1="197.5" x2="602.5" y2="197.5" stroke="#6a7272" stroke-width="1"/>
<line x1="600" y1="202.5" x2="602.5" y2="202.5" stroke="#6a7272" stroke-width="1"/>
<line x1="600" y1="207.5" x2="602.5" y2="207.5" stroke="#6a7272" stroke-width="1"/>
<line x1="600" y1="212.5" x2="602.5" y2="212.5" stroke="#6a7272" stroke-width="1"/>
<line x1="600" y1="218.5" x2="602.5" y2="218.5" stroke="#6a7272" stroke-width="1"/>
<line x1="600" y1="223.5" x2="602.5" y2="223.5" stroke="#6a7272" stroke-width="1"/>
<line x1="600" y1="228.5" x2="602.5" y2="228.5" stroke="#6a7272" stroke-width="1"/>
<line x1="600" y1="233.5" x2="602.5" y2="233.5" stroke="#6a7272" stroke-width="1"/>
<line x1="600" y1="238.5" x2="602.5" y2="238.5" stroke="#6a7272" stroke-width="1"/>
<line x1="600" y1="244.5" x2="602.5" y2="244.5" stroke="#6a7272" stroke-width="1"/>
<line x1="600" y1="249.5" x2="602.5" y2="249.5" stroke="#6a7272" stroke-width="1"/>
<line x1="600" y1="254.5" x2="602.5" y2="254.5" stroke="#6a7272" stroke-width="1"/>
<line x1="600" y1="259.5" x2="602.5" y2="259.5" stroke="#6a7272" stroke-width="1"/>
<line x1="600" y1="265.5" x2="602.5" y2="265.5" stroke="#6a7272" stroke-width="1"/>
<line x1="600" y1="270.5" x2="602.5" y2="270.5" stroke="#6a7272" stroke-width="1"/>
<line x1="600" y1="275.5" x2="602.5" y2="275.5" stroke="#6a7272" stroke-width="1"/>
<line x1="600" y1="280.5" x2="602.5" y2="280.5" stroke="#6a7272" stroke-width="1"/>
<line x1="600" y1="286.5" x2="602.5" y2="286.5" stroke="#6a7272" stroke-width="1"/>
<line x1="600" y1="291.5" x2="602.5" y2="291.5" stroke="#6a7272" stroke-width="1"/>
<line x1="600" y1="296.5" x2="602.5" y2="296.5" stroke="#6a7272" stroke-width="1"/>
<line x1="600" y1="301.5" x2="602.5" y2="301.5" stroke="#6a7272" stroke-width="1"/>
<line x1="600" y1="306.5" x2="602.5" y2="306.5" stroke="#6a7272" stroke-width="1"/>
<line x1="600" y1="312.5" x2="602.5" y2="312.5" stroke="#6a7272" stroke-width="1"/>
<line x1="600" y1="317.5" x2="602.5" y2="317.5" stroke="#6a7272" stroke-width="1"/>
<line x1="600" y1="323.5" x2="602.5" y2="323.5" stroke="#6a7272" stroke-width="1"/>
<line x1="600" y1="328.5" x2="602.5" y2="328.5" stroke="#6a7272" stroke-width="1"/>
<line x1="600" y1="333.5" x2="602.5" y2="333.5" stroke="#6a7272" stroke-width="1"/>
<line x1="600" y1="338.5" x2="602.5" y2="338.5" stroke="#6a7272" stroke-width="1"/>
<line x1="600" y1="343.5" x2="602.5" y2="343.5" stroke="#6a7272" stroke-width="1"/>
<line x1="600" y1="349.5" x2="602.5" y2="349.5" stroke="#6a7272" stroke-width="1"/>
<line x1="600" y1="354.5" x2="602.5" y2="354.5" stroke="#6a7272" stroke-width="1"/>
<line x1="600" y1="359.5" x2="602.5" y2="359.5" stroke="#6a7272" stroke-width="1"/>
<line x1="600" y1="364.5" x2="602.5" y2="364.5" stroke="#6a7272" stroke-width="1"/>
<line x1="600" y1="370.5" x2="602.5" y2="370.5" stroke="#6a7272" stroke-width="1"/>
<line x1="600" y1="375.5" x2="602.5" y2="375.5" stroke="#6a7272" stroke-width="1"/>
<line x1="600" y1="380.5" x2="602.5" y2="380.5" stroke="#6a7272" stroke-width="1"/>
<line x1="600" y1="385.5" x2="602.5" y2="385.5" stroke="#6a7272" stroke-width="1"/>
<line x1="600" y1="391.5" x2="602.5" y2="391.5" stroke="#6a7272" stroke-width="1"/>
<line x1="600" y1="396.5" x2="602.5" y2="396.5" stroke="#6a7272" stroke-width="1"/>
<line x1="600" y1="401.5" x2="602.5" y2="401.5" stroke="#6a7272" stroke-width="1"/>
<line x1="600" y1="406.5" x2="602.5" y2="406.5" stroke="#6a7272" stroke-width="1"/>
<line x1="600" y1="411.5" x2="602.5" y2="411.5" stroke="#6a7272" stroke-width="1"/>
<line x1="600" y1="417.5" x2="602.5" y2="417.5" stroke="#6a7272" stroke-width="1"/>
<line x1="600" y1="422.5" x2="602.5" y2="422.5" stroke="#6a7272" stroke-width="1"/>
<line x1="600" y1="427.5" x2="602.5" y2="427.5" stroke="#6a7272" stroke-width="1"/>
<line x1="600" y1="432.5" x2="602.5" y2="432.5" stroke="#6a7272" stroke-width="1"/>
<line x1="600" y1="438.5" x2="602.5" y2="438.5" stroke="#6a7272" stroke-width="1"/>
<line x1="600" y1="443.5" x2="602.5" y2="443.5" stroke="#6a7272" stroke-width="1"/>
<line x1="600" y1="448.5" x2="602.5" y2="448.5" stroke="#6a7272" stroke-width="1"/>
<line x1="600" y1="453.5" x2="602.5" y2="453.5" stroke="#6a7272" stroke-width="1"/>
<line x1="600" y1="459.5" x2="602.5" y2="459.5" stroke="#6a7272" stroke-width="1"/>
<line x1="600" y1="464.5" x2="602.5" y2="464.5" stroke="#6a7272" stroke-width="1"/>
<line x1="600" y1="469.5" x2="602.5" y2="469.5" stroke="#6a7272" stroke-width="1"/>
<line x1="600" y1="474.5" x2="602.5" y2="474.5" stroke="#6a7272" stroke-width="1"/>
<line x1="600" y1="479.5" x2="602.5" y2="479.5" stroke="#6a7272" stroke-width="1"/>
</svg>

<!-- scale buttons -->
<div class="abs sb" style="top:145.8px;background:#fff;border-color:#fff;color:#1a2224">smpl</div>
<div class="abs sb" style="top:160px">dB</div>
<div class="abs sb" style="top:174.2px">norm</div>
<div class="abs sb" style="top:188.5px">perc</div>
<!-- watermarks -->
<svg class="abs" style="left:478.5px;top:108.00000000000001px;opacity:0.95" width="40.6" height="40.6" viewBox="-1.02 -1.02 2.04 2.04"><defs><mask id="lm1_0"><rect x="-1.1" y="-1.1" width="2.2" height="2.2" fill="#fff"/><circle cx="0.205" cy="0.355" r="0.660" fill="#000"/></mask><mask id="lm1_1"><rect x="-1.1" y="-1.1" width="2.2" height="2.2" fill="#fff"/><circle cx="-0.205" cy="0.355" r="0.660" fill="#000"/></mask><mask id="lm1_2"><rect x="-1.1" y="-1.1" width="2.2" height="2.2" fill="#fff"/><circle cx="-0.410" cy="0.000" r="0.660" fill="#000"/></mask><mask id="lm1_3"><rect x="-1.1" y="-1.1" width="2.2" height="2.2" fill="#fff"/><circle cx="-0.205" cy="-0.355" r="0.660" fill="#000"/></mask><mask id="lm1_4"><rect x="-1.1" y="-1.1" width="2.2" height="2.2" fill="#fff"/><circle cx="0.205" cy="-0.355" r="0.660" fill="#000"/></mask><mask id="lm1_5"><rect x="-1.1" y="-1.1" width="2.2" height="2.2" fill="#fff"/><circle cx="0.410" cy="-0.000" r="0.660" fill="#000"/></mask></defs><g fill="#aab2ae" transform="scale(1,1) rotate(0)"><circle cx="0.410" cy="0.000" r="0.6" mask="url(#lm1_0)"/><circle cx="0.205" cy="0.355" r="0.6" mask="url(#lm1_1)"/><circle cx="-0.205" cy="0.355" r="0.6" mask="url(#lm1_2)"/><circle cx="-0.410" cy="0.000" r="0.6" mask="url(#lm1_3)"/><circle cx="-0.205" cy="-0.355" r="0.6" mask="url(#lm1_4)"/><circle cx="0.205" cy="-0.355" r="0.6" mask="url(#lm1_5)"/></g></svg>
<svg class="abs" style="left:0;top:0;opacity:0.55" width="650" height="506" viewBox="0 0 650 506"><g transform="translate(523.2,98.2) rotate(-27.5)">
<text x="-9.6" y="7.1" font-family="Liberation Sans, Noto Sans CJK SC, sans-serif" font-size="19.2" letter-spacing="2.05" fill="rgba(255,255,255,0.9)" stroke="rgba(110,120,120,0.9)" stroke-width="0.7">阳子湖软件园</text>
<text x="-5.5" y="27" font-family="Liberation Sans, sans-serif" font-weight="bold" font-size="12.3" letter-spacing="0.25" fill="rgba(255,255,255,0.9)" stroke="rgba(110,120,120,0.9)" stroke-width="0.3">www.yangzihu.com</text></g></svg>
<svg class="abs" style="left:250.2px;top:269.59999999999997px;opacity:0.95" width="40.6" height="40.6" viewBox="-1.02 -1.02 2.04 2.04"><defs><mask id="lm2_0"><rect x="-1.1" y="-1.1" width="2.2" height="2.2" fill="#fff"/><circle cx="0.205" cy="0.355" r="0.660" fill="#000"/></mask><mask id="lm2_1"><rect x="-1.1" y="-1.1" width="2.2" height="2.2" fill="#fff"/><circle cx="-0.205" cy="0.355" r="0.660" fill="#000"/></mask><mask id="lm2_2"><rect x="-1.1" y="-1.1" width="2.2" height="2.2" fill="#fff"/><circle cx="-0.410" cy="0.000" r="0.660" fill="#000"/></mask><mask id="lm2_3"><rect x="-1.1" y="-1.1" width="2.2" height="2.2" fill="#fff"/><circle cx="-0.205" cy="-0.355" r="0.660" fill="#000"/></mask><mask id="lm2_4"><rect x="-1.1" y="-1.1" width="2.2" height="2.2" fill="#fff"/><circle cx="0.205" cy="-0.355" r="0.660" fill="#000"/></mask><mask id="lm2_5"><rect x="-1.1" y="-1.1" width="2.2" height="2.2" fill="#fff"/><circle cx="0.410" cy="-0.000" r="0.660" fill="#000"/></mask></defs><g fill="#aab2ae" transform="scale(1,1) rotate(0)"><circle cx="0.410" cy="0.000" r="0.6" mask="url(#lm2_0)"/><circle cx="0.205" cy="0.355" r="0.6" mask="url(#lm2_1)"/><circle cx="-0.205" cy="0.355" r="0.6" mask="url(#lm2_2)"/><circle cx="-0.410" cy="0.000" r="0.6" mask="url(#lm2_3)"/><circle cx="-0.205" cy="-0.355" r="0.6" mask="url(#lm2_4)"/><circle cx="0.205" cy="-0.355" r="0.6" mask="url(#lm2_5)"/></g></svg>
<svg class="abs" style="left:0;top:0;opacity:0.55" width="650" height="506" viewBox="0 0 650 506"><g transform="translate(297,264.2) rotate(-28.6)">
<text x="-9.6" y="7.1" font-family="Liberation Sans, Noto Sans CJK SC, sans-serif" font-size="19.2" letter-spacing="2.05" fill="rgba(255,255,255,0.9)" stroke="rgba(110,120,120,0.9)" stroke-width="0.7">阳子湖软件园</text>
<text x="-5.5" y="27" font-family="Liberation Sans, sans-serif" font-weight="bold" font-size="12.3" letter-spacing="0.25" fill="rgba(255,255,255,0.9)" stroke="rgba(110,120,120,0.9)" stroke-width="0.3">www.yangzihu.com</text></g></svg>
<svg class="abs" style="left:-1px;top:434.5px;opacity:0.6" width="40" height="40" viewBox="-1.02 -1.02 2.04 2.04"><defs><mask id="lm3_0"><rect x="-1.1" y="-1.1" width="2.2" height="2.2" fill="#fff"/><circle cx="0.205" cy="0.355" r="0.660" fill="#000"/></mask><mask id="lm3_1"><rect x="-1.1" y="-1.1" width="2.2" height="2.2" fill="#fff"/><circle cx="-0.205" cy="0.355" r="0.660" fill="#000"/></mask><mask id="lm3_2"><rect x="-1.1" y="-1.1" width="2.2" height="2.2" fill="#fff"/><circle cx="-0.410" cy="0.000" r="0.660" fill="#000"/></mask><mask id="lm3_3"><rect x="-1.1" y="-1.1" width="2.2" height="2.2" fill="#fff"/><circle cx="-0.205" cy="-0.355" r="0.660" fill="#000"/></mask><mask id="lm3_4"><rect x="-1.1" y="-1.1" width="2.2" height="2.2" fill="#fff"/><circle cx="0.205" cy="-0.355" r="0.660" fill="#000"/></mask><mask id="lm3_5"><rect x="-1.1" y="-1.1" width="2.2" height="2.2" fill="#fff"/><circle cx="0.410" cy="-0.000" r="0.660" fill="#000"/></mask></defs><g fill="#dde1de" transform="scale(1,1) rotate(0)"><circle cx="0.410" cy="0.000" r="0.6" mask="url(#lm3_0)"/><circle cx="0.205" cy="0.355" r="0.6" mask="url(#lm3_1)"/><circle cx="-0.205" cy="0.355" r="0.6" mask="url(#lm3_2)"/><circle cx="-0.410" cy="0.000" r="0.6" mask="url(#lm3_3)"/><circle cx="-0.205" cy="-0.355" r="0.6" mask="url(#lm3_4)"/><circle cx="0.205" cy="-0.355" r="0.6" mask="url(#lm3_5)"/></g></svg>
<svg class="abs" style="left:0;top:0;opacity:0.13" width="650" height="506" viewBox="0 0 650 506"><g transform="translate(44,424) rotate(-28)">
<text x="-9.6" y="7.1" font-family="Liberation Sans, Noto Sans CJK SC, sans-serif" font-size="19.2" letter-spacing="2.05" fill="rgba(255,255,255,0.9)" stroke="rgba(225,230,230,0.9)" stroke-width="0.7">阳子湖软件园</text>
<text x="-5.5" y="27" font-family="Liberation Sans, sans-serif" font-weight="bold" font-size="12.3" letter-spacing="0.25" fill="rgba(255,255,255,0.9)" stroke="rgba(225,230,230,0.9)" stroke-width="0.3">www.yangzihu.com</text></g></svg>
<div class="abs" style="left:499.5px;top:475.5px;font-family:'Liberation Sans',sans-serif;font-weight:bold;font-size:14.7px;line-height:20px;color:#020505;opacity:0.9;white-space:nowrap">Www.CnDown.Com</div>
</div>
<div id="bd"></div>
</body></html>
